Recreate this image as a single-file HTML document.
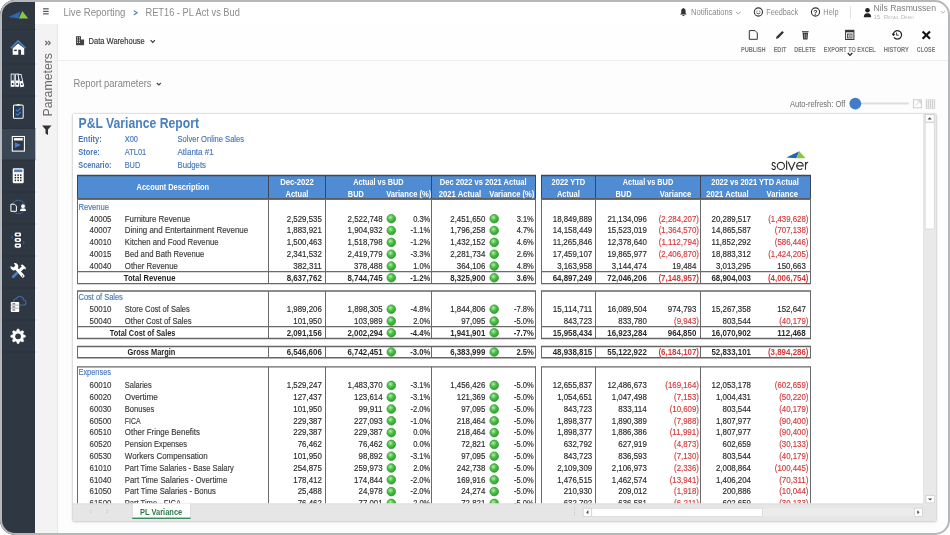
<!DOCTYPE html>
<html><head><meta charset="utf-8">
<style>
*{margin:0;padding:0;box-sizing:border-box}
html,body{width:950px;height:535px;overflow:hidden;background:#fff;font-family:"Liberation Sans",sans-serif}
#clip{position:absolute;left:0;top:0;width:950px;height:535px;border-radius:15px;overflow:hidden;background:#fdfdfd}
#frame{position:absolute;left:0;top:0;width:950px;height:535px;border-radius:15px;border:2.5px solid #b6b7ba;pointer-events:none}
#side{position:absolute;left:0;top:0;width:35.7px;height:535px;background:#2f3742}
#hdr{position:absolute;left:35.3px;top:0;width:915px;height:24px;background:#fff;box-shadow:0 1px 2px rgba(0,0,0,0.10)}
#panel{position:absolute;left:35.3px;top:24px;width:23px;height:511px;background:#f3f3f3;border-right:1px solid #e6e6e6}
#tb{position:absolute;left:58.2px;top:24px;width:892px;height:36.5px;border-bottom:1px solid #ededed;background:#fefefe}
#sheet{position:absolute;left:73px;top:113.8px;width:863px;height:407.6px;background:#fff;box-shadow:0 0 2px rgba(0,0,0,0.28), 0 1px 3px rgba(0,0,0,0.12)}
svg{position:absolute;left:0;top:0;will-change:transform}
text{font-family:"Liberation Sans",sans-serif}
</style></head><body>
<div id="clip">
  <div id="side"></div>
  <div id="hdr"></div>
  <div id="panel"></div>
  <div id="tb"></div>
  <div id="sheet"></div>
  <svg width="950" height="535" viewBox="0 0 950 535">
    <defs>
      <radialGradient id="gdot" cx="0.4" cy="0.35" r="0.7">
        <stop offset="0" stop-color="#b6f0a0"/>
        <stop offset="0.45" stop-color="#4cc24a"/>
        <stop offset="1" stop-color="#2a9a2a"/>
      </radialGradient>
      <clipPath id="shclip"><rect x="73" y="113.4" width="850.6" height="390.2"/></clipPath>
    </defs>
    <g clip-path="url(#shclip)">
<text x="78.5" y="127.6" font-size="13.8" font-weight="700" fill="#4a7fbf" textLength="120.5" lengthAdjust="spacingAndGlyphs">P&amp;L Variance Report</text>
<text x="78.3" y="142.2" font-size="8.7" font-weight="700" fill="#4678bd" textLength="23.48" lengthAdjust="spacingAndGlyphs">Entity:</text>
<text x="124.7" y="142.2" font-size="8.7" fill="#4678bd" stroke="#4678bd" stroke-width="0.16" textLength="13.26" lengthAdjust="spacingAndGlyphs">X00</text>
<text x="177.5" y="142.2" font-size="8.7" fill="#4678bd" stroke="#4678bd" stroke-width="0.16" textLength="66.55" lengthAdjust="spacingAndGlyphs">Solver Online Sales</text>
<text x="78.3" y="155.3" font-size="8.7" font-weight="700" fill="#4678bd" textLength="21.56" lengthAdjust="spacingAndGlyphs">Store:</text>
<text x="124.7" y="155.3" font-size="8.7" fill="#4678bd" stroke="#4678bd" stroke-width="0.16" textLength="21.62" lengthAdjust="spacingAndGlyphs">ATL01</text>
<text x="177.5" y="155.3" font-size="8.7" fill="#4678bd" stroke="#4678bd" stroke-width="0.16" textLength="36.27" lengthAdjust="spacingAndGlyphs">Atlanta #1</text>
<text x="78.3" y="168.2" font-size="8.7" font-weight="700" fill="#4678bd" textLength="33.22" lengthAdjust="spacingAndGlyphs">Scenario:</text>
<text x="124.7" y="168.2" font-size="8.7" fill="#4678bd" stroke="#4678bd" stroke-width="0.16" textLength="15.58" lengthAdjust="spacingAndGlyphs">BUD</text>
<text x="177.5" y="168.2" font-size="8.7" fill="#4678bd" stroke="#4678bd" stroke-width="0.16" textLength="28.45" lengthAdjust="spacingAndGlyphs">Budgets</text>
<text x="771.3" y="169.8" font-size="15" textLength="4.8" lengthAdjust="spacingAndGlyphs">s</text>
<circle cx="780.85" cy="165.9" r="3.6" fill="none" stroke="#333" stroke-width="1.2"/>
<rect x="786" y="160.6" width="1.2" height="9.2" fill="#333"/>
<path d="M788.3 162 L791.6 169.8 L794.9 162" fill="none" stroke="#333" stroke-width="1.2"/>
<path d="M796.8 165.9 L803.2 165.9 A3.3 3.6 0 1 0 802.3 168.4" fill="none" stroke="#333" stroke-width="1.15"/>
<path d="M805.5 162 L805.5 169.8 M805.5 165.3 Q806 162.2 808.2 162.2" fill="none" stroke="#333" stroke-width="1.15"/>
<path d="M786.2 157.4 L799.3 151.2 L796.3 158.3 Z" fill="#2266b0" />
<path d="M796.6 158.3 L799.3 151.2 L805.6 158.3 Z" fill="#8cc63f" />
<rect x="77.5" y="175.5" width="458.0" height="23.400000000000006" fill="#508cd3" />
<rect x="541.5" y="175.5" width="269.0" height="23.400000000000006" fill="#508cd3" />
<line x1="77.5" y1="175.5" x2="77.5" y2="198.9" stroke="#3a475a" stroke-width="1" />
<line x1="268.5" y1="175.5" x2="268.5" y2="198.9" stroke="#3a475a" stroke-width="1" />
<line x1="325.5" y1="175.5" x2="325.5" y2="198.9" stroke="#3a475a" stroke-width="1" />
<line x1="431.5" y1="175.5" x2="431.5" y2="198.9" stroke="#3a475a" stroke-width="1" />
<line x1="535.5" y1="175.5" x2="535.5" y2="198.9" stroke="#3a475a" stroke-width="1" />
<line x1="77.0" y1="175.5" x2="536.0" y2="175.5" stroke="#3a475a" stroke-width="1.3" />
<line x1="77.0" y1="198.9" x2="536.0" y2="198.9" stroke="#3a475a" stroke-width="1.6" />
<line x1="541.5" y1="175.5" x2="541.5" y2="198.9" stroke="#3a475a" stroke-width="1" />
<line x1="595.5" y1="175.5" x2="595.5" y2="198.9" stroke="#3a475a" stroke-width="1" />
<line x1="700.5" y1="175.5" x2="700.5" y2="198.9" stroke="#3a475a" stroke-width="1" />
<line x1="810.5" y1="175.5" x2="810.5" y2="198.9" stroke="#3a475a" stroke-width="1" />
<line x1="541.0" y1="175.5" x2="811.0" y2="175.5" stroke="#3a475a" stroke-width="1.3" />
<line x1="541.0" y1="198.9" x2="811.0" y2="198.9" stroke="#3a475a" stroke-width="1.6" />
<text x="172.8" y="190.1" font-size="8.6" font-weight="700" fill="#ffffff" text-anchor="middle" textLength="72.51" lengthAdjust="spacingAndGlyphs">Account Description</text>
<text x="297" y="184.6" font-size="8.6" font-weight="700" fill="#ffffff" text-anchor="middle" textLength="33.61" lengthAdjust="spacingAndGlyphs">Dec-2022</text>
<text x="297" y="196.5" font-size="8.6" font-weight="700" fill="#ffffff" text-anchor="middle" textLength="22.91" lengthAdjust="spacingAndGlyphs">Actual</text>
<text x="378.4" y="184.6" font-size="8.6" font-weight="700" fill="#ffffff" text-anchor="middle" textLength="50.31" lengthAdjust="spacingAndGlyphs">Actual vs BUD</text>
<text x="355.8" y="196.5" font-size="8.6" font-weight="700" fill="#ffffff" text-anchor="middle" textLength="15.95" lengthAdjust="spacingAndGlyphs">BUD</text>
<text x="408.7" y="196.5" font-size="8.6" font-weight="700" fill="#ffffff" text-anchor="middle" textLength="45.11" lengthAdjust="spacingAndGlyphs">Variance (%)</text>
<text x="483.2" y="184.6" font-size="8.6" font-weight="700" fill="#ffffff" text-anchor="middle" textLength="86.77" lengthAdjust="spacingAndGlyphs">Dec 2022 vs 2021 Actual</text>
<text x="460" y="196.5" font-size="8.6" font-weight="700" fill="#ffffff" text-anchor="middle" textLength="42.4" lengthAdjust="spacingAndGlyphs">2021 Actual</text>
<text x="511.8" y="196.5" font-size="8.6" font-weight="700" fill="#ffffff" text-anchor="middle" textLength="45.11" lengthAdjust="spacingAndGlyphs">Variance (%)</text>
<text x="568.4" y="184.6" font-size="8.6" font-weight="700" fill="#ffffff" text-anchor="middle" textLength="33.73" lengthAdjust="spacingAndGlyphs">2022 YTD</text>
<text x="568.4" y="196.5" font-size="8.6" font-weight="700" fill="#ffffff" text-anchor="middle" textLength="22.91" lengthAdjust="spacingAndGlyphs">Actual</text>
<text x="648" y="184.6" font-size="8.6" font-weight="700" fill="#ffffff" text-anchor="middle" textLength="50.31" lengthAdjust="spacingAndGlyphs">Actual vs BUD</text>
<text x="623.5" y="196.5" font-size="8.6" font-weight="700" fill="#ffffff" text-anchor="middle" textLength="15.95" lengthAdjust="spacingAndGlyphs">BUD</text>
<text x="675.6" y="196.5" font-size="8.6" font-weight="700" fill="#ffffff" text-anchor="middle" textLength="31.47" lengthAdjust="spacingAndGlyphs">Variance</text>
<text x="755" y="184.6" font-size="8.6" font-weight="700" fill="#ffffff" text-anchor="middle" textLength="87.58" lengthAdjust="spacingAndGlyphs">2022 vs 2021 YTD Actual</text>
<text x="727.5" y="196.5" font-size="8.6" font-weight="700" fill="#ffffff" text-anchor="middle" textLength="42.4" lengthAdjust="spacingAndGlyphs">2021 Actual</text>
<text x="782.3" y="196.5" font-size="8.6" font-weight="700" fill="#ffffff" text-anchor="middle" textLength="31.47" lengthAdjust="spacingAndGlyphs">Variance</text>
<line x1="77.5" y1="198.9" x2="77.5" y2="283.6" stroke="#6a6a6a" stroke-width="1" />
<line x1="268.5" y1="198.9" x2="268.5" y2="283.6" stroke="#6a6a6a" stroke-width="1" />
<line x1="325.5" y1="198.9" x2="325.5" y2="283.6" stroke="#6a6a6a" stroke-width="1" />
<line x1="431.5" y1="198.9" x2="431.5" y2="283.6" stroke="#6a6a6a" stroke-width="1" />
<line x1="535.5" y1="198.9" x2="535.5" y2="283.6" stroke="#6a6a6a" stroke-width="1" />
<line x1="77.0" y1="198.9" x2="536.0" y2="198.9" stroke="#666" stroke-width="1.4" />
<line x1="77.0" y1="283.6" x2="536.0" y2="283.6" stroke="#666" stroke-width="1.4" />
<line x1="77.0" y1="271.6" x2="536.0" y2="271.6" stroke="#6a6a6a" stroke-width="1.3" />
<line x1="541.5" y1="198.9" x2="541.5" y2="283.6" stroke="#6a6a6a" stroke-width="1" />
<line x1="595.5" y1="198.9" x2="595.5" y2="283.6" stroke="#6a6a6a" stroke-width="1" />
<line x1="700.5" y1="198.9" x2="700.5" y2="283.6" stroke="#6a6a6a" stroke-width="1" />
<line x1="810.5" y1="198.9" x2="810.5" y2="283.6" stroke="#6a6a6a" stroke-width="1" />
<line x1="541.0" y1="198.9" x2="811.0" y2="198.9" stroke="#666" stroke-width="1.4" />
<line x1="541.0" y1="283.6" x2="811.0" y2="283.6" stroke="#666" stroke-width="1.4" />
<line x1="541.0" y1="271.6" x2="811.0" y2="271.6" stroke="#6a6a6a" stroke-width="1.3" />
<text x="78.5" y="209.6" font-size="8.7" fill="#4678bd" stroke="#4678bd" stroke-width="0.16" textLength="30.61" lengthAdjust="spacingAndGlyphs">Revenue</text>
<text x="89.5" y="221.5" font-size="8.7" fill="#3b3b3b" stroke="#3b3b3b" stroke-width="0.16" textLength="21.93" lengthAdjust="spacingAndGlyphs">40005</text>
<text x="124.8" y="221.5" font-size="8.7" fill="#3b3b3b" stroke="#3b3b3b" stroke-width="0.16" textLength="65.39" lengthAdjust="spacingAndGlyphs">Furniture Revenue</text>
<text x="321.8" y="221.5" font-size="8.7" fill="#2b2b2b" stroke="#2b2b2b" stroke-width="0.16" text-anchor="end" textLength="35.02" lengthAdjust="spacingAndGlyphs">2,529,535</text>
<text x="382.6" y="221.5" font-size="8.7" fill="#2b2b2b" stroke="#2b2b2b" stroke-width="0.16" text-anchor="end" textLength="35.02" lengthAdjust="spacingAndGlyphs">2,522,748</text>
<circle cx="391.3" cy="218.7" r="4.3" fill="url(#gdot)" stroke="#3c9a3c" stroke-width="0.8"/>
<text x="430.3" y="221.5" font-size="8.7" fill="#2b2b2b" stroke="#2b2b2b" stroke-width="0.16" text-anchor="end" textLength="17.14" lengthAdjust="spacingAndGlyphs">0.3%</text>
<text x="485.3" y="221.5" font-size="8.7" fill="#2b2b2b" stroke="#2b2b2b" stroke-width="0.16" text-anchor="end" textLength="35.02" lengthAdjust="spacingAndGlyphs">2,451,650</text>
<circle cx="494.2" cy="218.7" r="4.3" fill="url(#gdot)" stroke="#3c9a3c" stroke-width="0.8"/>
<text x="533.8" y="221.5" font-size="8.7" fill="#2b2b2b" stroke="#2b2b2b" stroke-width="0.16" text-anchor="end" textLength="17.14" lengthAdjust="spacingAndGlyphs">3.1%</text>
<text x="592.2" y="221.5" font-size="8.7" fill="#2b2b2b" stroke="#2b2b2b" stroke-width="0.16" text-anchor="end" textLength="39.41" lengthAdjust="spacingAndGlyphs">18,849,889</text>
<text x="646.8" y="221.5" font-size="8.7" fill="#2b2b2b" stroke="#2b2b2b" stroke-width="0.16" text-anchor="end" textLength="39.41" lengthAdjust="spacingAndGlyphs">21,134,096</text>
<text x="699.0" y="221.5" font-size="8.7" fill="#d23b3b" stroke="#d23b3b" stroke-width="0.16" text-anchor="end" textLength="40.27" lengthAdjust="spacingAndGlyphs">(2,284,207)</text>
<text x="808.5" y="221.5" font-size="8.7" fill="#d23b3b" stroke="#d23b3b" stroke-width="0.16" text-anchor="end" textLength="40.27" lengthAdjust="spacingAndGlyphs">(1,439,628)</text>
<text x="751.0" y="221.5" font-size="8.7" fill="#2b2b2b" stroke="#2b2b2b" stroke-width="0.16" text-anchor="end" textLength="39.41" lengthAdjust="spacingAndGlyphs">20,289,517</text>
<text x="89.5" y="233.35" font-size="8.7" fill="#3b3b3b" stroke="#3b3b3b" stroke-width="0.16" textLength="21.93" lengthAdjust="spacingAndGlyphs">40007</text>
<text x="124.8" y="233.35" font-size="8.7" fill="#3b3b3b" stroke="#3b3b3b" stroke-width="0.16" textLength="123.37" lengthAdjust="spacingAndGlyphs">Dining and Entertainment Revenue</text>
<text x="321.8" y="233.35" font-size="8.7" fill="#2b2b2b" stroke="#2b2b2b" stroke-width="0.16" text-anchor="end" textLength="35.02" lengthAdjust="spacingAndGlyphs">1,883,921</text>
<text x="382.6" y="233.35" font-size="8.7" fill="#2b2b2b" stroke="#2b2b2b" stroke-width="0.16" text-anchor="end" textLength="35.02" lengthAdjust="spacingAndGlyphs">1,904,932</text>
<circle cx="391.3" cy="230.54999999999998" r="4.3" fill="url(#gdot)" stroke="#3c9a3c" stroke-width="0.8"/>
<text x="430.3" y="233.35" font-size="8.7" fill="#2b2b2b" stroke="#2b2b2b" stroke-width="0.16" text-anchor="end" textLength="19.78" lengthAdjust="spacingAndGlyphs">-1.1%</text>
<text x="485.3" y="233.35" font-size="8.7" fill="#2b2b2b" stroke="#2b2b2b" stroke-width="0.16" text-anchor="end" textLength="35.02" lengthAdjust="spacingAndGlyphs">1,796,258</text>
<circle cx="494.2" cy="230.54999999999998" r="4.3" fill="url(#gdot)" stroke="#3c9a3c" stroke-width="0.8"/>
<text x="533.8" y="233.35" font-size="8.7" fill="#2b2b2b" stroke="#2b2b2b" stroke-width="0.16" text-anchor="end" textLength="17.14" lengthAdjust="spacingAndGlyphs">4.7%</text>
<text x="592.2" y="233.35" font-size="8.7" fill="#2b2b2b" stroke="#2b2b2b" stroke-width="0.16" text-anchor="end" textLength="39.41" lengthAdjust="spacingAndGlyphs">14,158,449</text>
<text x="646.8" y="233.35" font-size="8.7" fill="#2b2b2b" stroke="#2b2b2b" stroke-width="0.16" text-anchor="end" textLength="39.41" lengthAdjust="spacingAndGlyphs">15,523,019</text>
<text x="699.0" y="233.35" font-size="8.7" fill="#d23b3b" stroke="#d23b3b" stroke-width="0.16" text-anchor="end" textLength="40.27" lengthAdjust="spacingAndGlyphs">(1,364,570)</text>
<text x="808.5" y="233.35" font-size="8.7" fill="#d23b3b" stroke="#d23b3b" stroke-width="0.16" text-anchor="end" textLength="33.72" lengthAdjust="spacingAndGlyphs">(707,138)</text>
<text x="751.0" y="233.35" font-size="8.7" fill="#2b2b2b" stroke="#2b2b2b" stroke-width="0.16" text-anchor="end" textLength="39.41" lengthAdjust="spacingAndGlyphs">14,865,587</text>
<text x="89.5" y="245.2" font-size="8.7" fill="#3b3b3b" stroke="#3b3b3b" stroke-width="0.16" textLength="21.93" lengthAdjust="spacingAndGlyphs">40010</text>
<text x="124.8" y="245.2" font-size="8.7" fill="#3b3b3b" stroke="#3b3b3b" stroke-width="0.16" textLength="93.77" lengthAdjust="spacingAndGlyphs">Kitchen and Food Revenue</text>
<text x="321.8" y="245.2" font-size="8.7" fill="#2b2b2b" stroke="#2b2b2b" stroke-width="0.16" text-anchor="end" textLength="35.02" lengthAdjust="spacingAndGlyphs">1,500,463</text>
<text x="382.6" y="245.2" font-size="8.7" fill="#2b2b2b" stroke="#2b2b2b" stroke-width="0.16" text-anchor="end" textLength="35.02" lengthAdjust="spacingAndGlyphs">1,518,798</text>
<circle cx="391.3" cy="242.39999999999998" r="4.3" fill="url(#gdot)" stroke="#3c9a3c" stroke-width="0.8"/>
<text x="430.3" y="245.2" font-size="8.7" fill="#2b2b2b" stroke="#2b2b2b" stroke-width="0.16" text-anchor="end" textLength="19.78" lengthAdjust="spacingAndGlyphs">-1.2%</text>
<text x="485.3" y="245.2" font-size="8.7" fill="#2b2b2b" stroke="#2b2b2b" stroke-width="0.16" text-anchor="end" textLength="35.02" lengthAdjust="spacingAndGlyphs">1,432,152</text>
<circle cx="494.2" cy="242.39999999999998" r="4.3" fill="url(#gdot)" stroke="#3c9a3c" stroke-width="0.8"/>
<text x="533.8" y="245.2" font-size="8.7" fill="#2b2b2b" stroke="#2b2b2b" stroke-width="0.16" text-anchor="end" textLength="17.14" lengthAdjust="spacingAndGlyphs">4.6%</text>
<text x="592.2" y="245.2" font-size="8.7" fill="#2b2b2b" stroke="#2b2b2b" stroke-width="0.16" text-anchor="end" textLength="39.41" lengthAdjust="spacingAndGlyphs">11,265,846</text>
<text x="646.8" y="245.2" font-size="8.7" fill="#2b2b2b" stroke="#2b2b2b" stroke-width="0.16" text-anchor="end" textLength="39.41" lengthAdjust="spacingAndGlyphs">12,378,640</text>
<text x="699.0" y="245.2" font-size="8.7" fill="#d23b3b" stroke="#d23b3b" stroke-width="0.16" text-anchor="end" textLength="40.27" lengthAdjust="spacingAndGlyphs">(1,112,794)</text>
<text x="808.5" y="245.2" font-size="8.7" fill="#d23b3b" stroke="#d23b3b" stroke-width="0.16" text-anchor="end" textLength="33.72" lengthAdjust="spacingAndGlyphs">(586,446)</text>
<text x="751.0" y="245.2" font-size="8.7" fill="#2b2b2b" stroke="#2b2b2b" stroke-width="0.16" text-anchor="end" textLength="39.41" lengthAdjust="spacingAndGlyphs">11,852,292</text>
<text x="89.5" y="257.05" font-size="8.7" fill="#3b3b3b" stroke="#3b3b3b" stroke-width="0.16" textLength="21.93" lengthAdjust="spacingAndGlyphs">40015</text>
<text x="124.8" y="257.05" font-size="8.7" fill="#3b3b3b" stroke="#3b3b3b" stroke-width="0.16" textLength="79.55" lengthAdjust="spacingAndGlyphs">Bed and Bath Revenue</text>
<text x="321.8" y="257.05" font-size="8.7" fill="#2b2b2b" stroke="#2b2b2b" stroke-width="0.16" text-anchor="end" textLength="35.02" lengthAdjust="spacingAndGlyphs">2,341,532</text>
<text x="382.6" y="257.05" font-size="8.7" fill="#2b2b2b" stroke="#2b2b2b" stroke-width="0.16" text-anchor="end" textLength="35.02" lengthAdjust="spacingAndGlyphs">2,419,779</text>
<circle cx="391.3" cy="254.25" r="4.3" fill="url(#gdot)" stroke="#3c9a3c" stroke-width="0.8"/>
<text x="430.3" y="257.05" font-size="8.7" fill="#2b2b2b" stroke="#2b2b2b" stroke-width="0.16" text-anchor="end" textLength="19.78" lengthAdjust="spacingAndGlyphs">-3.3%</text>
<text x="485.3" y="257.05" font-size="8.7" fill="#2b2b2b" stroke="#2b2b2b" stroke-width="0.16" text-anchor="end" textLength="35.02" lengthAdjust="spacingAndGlyphs">2,281,734</text>
<circle cx="494.2" cy="254.25" r="4.3" fill="url(#gdot)" stroke="#3c9a3c" stroke-width="0.8"/>
<text x="533.8" y="257.05" font-size="8.7" fill="#2b2b2b" stroke="#2b2b2b" stroke-width="0.16" text-anchor="end" textLength="17.14" lengthAdjust="spacingAndGlyphs">2.6%</text>
<text x="592.2" y="257.05" font-size="8.7" fill="#2b2b2b" stroke="#2b2b2b" stroke-width="0.16" text-anchor="end" textLength="39.41" lengthAdjust="spacingAndGlyphs">17,459,107</text>
<text x="646.8" y="257.05" font-size="8.7" fill="#2b2b2b" stroke="#2b2b2b" stroke-width="0.16" text-anchor="end" textLength="39.41" lengthAdjust="spacingAndGlyphs">19,865,977</text>
<text x="699.0" y="257.05" font-size="8.7" fill="#d23b3b" stroke="#d23b3b" stroke-width="0.16" text-anchor="end" textLength="40.27" lengthAdjust="spacingAndGlyphs">(2,406,870)</text>
<text x="808.5" y="257.05" font-size="8.7" fill="#d23b3b" stroke="#d23b3b" stroke-width="0.16" text-anchor="end" textLength="40.27" lengthAdjust="spacingAndGlyphs">(1,424,205)</text>
<text x="751.0" y="257.05" font-size="8.7" fill="#2b2b2b" stroke="#2b2b2b" stroke-width="0.16" text-anchor="end" textLength="39.41" lengthAdjust="spacingAndGlyphs">18,883,312</text>
<text x="89.5" y="268.9" font-size="8.7" fill="#3b3b3b" stroke="#3b3b3b" stroke-width="0.16" textLength="21.93" lengthAdjust="spacingAndGlyphs">40040</text>
<text x="124.8" y="268.9" font-size="8.7" fill="#3b3b3b" stroke="#3b3b3b" stroke-width="0.16" textLength="53.06" lengthAdjust="spacingAndGlyphs">Other Revenue</text>
<text x="321.8" y="268.9" font-size="8.7" fill="#2b2b2b" stroke="#2b2b2b" stroke-width="0.16" text-anchor="end" textLength="28.48" lengthAdjust="spacingAndGlyphs">382,311</text>
<text x="382.6" y="268.9" font-size="8.7" fill="#2b2b2b" stroke="#2b2b2b" stroke-width="0.16" text-anchor="end" textLength="28.48" lengthAdjust="spacingAndGlyphs">378,488</text>
<circle cx="391.3" cy="266.09999999999997" r="4.3" fill="url(#gdot)" stroke="#3c9a3c" stroke-width="0.8"/>
<text x="430.3" y="268.9" font-size="8.7" fill="#2b2b2b" stroke="#2b2b2b" stroke-width="0.16" text-anchor="end" textLength="17.14" lengthAdjust="spacingAndGlyphs">1.0%</text>
<text x="485.3" y="268.9" font-size="8.7" fill="#2b2b2b" stroke="#2b2b2b" stroke-width="0.16" text-anchor="end" textLength="28.48" lengthAdjust="spacingAndGlyphs">364,106</text>
<circle cx="494.2" cy="266.09999999999997" r="4.3" fill="url(#gdot)" stroke="#3c9a3c" stroke-width="0.8"/>
<text x="533.8" y="268.9" font-size="8.7" fill="#2b2b2b" stroke="#2b2b2b" stroke-width="0.16" text-anchor="end" textLength="17.14" lengthAdjust="spacingAndGlyphs">4.8%</text>
<text x="592.2" y="268.9" font-size="8.7" fill="#2b2b2b" stroke="#2b2b2b" stroke-width="0.16" text-anchor="end" textLength="35.02" lengthAdjust="spacingAndGlyphs">3,163,958</text>
<text x="646.8" y="268.9" font-size="8.7" fill="#2b2b2b" stroke="#2b2b2b" stroke-width="0.16" text-anchor="end" textLength="35.02" lengthAdjust="spacingAndGlyphs">3,144,474</text>
<text x="696.3" y="268.9" font-size="8.7" fill="#2b2b2b" stroke="#2b2b2b" stroke-width="0.16" text-anchor="end" textLength="24.09" lengthAdjust="spacingAndGlyphs">19,484</text>
<text x="805.8" y="268.9" font-size="8.7" fill="#2b2b2b" stroke="#2b2b2b" stroke-width="0.16" text-anchor="end" textLength="28.48" lengthAdjust="spacingAndGlyphs">150,663</text>
<text x="751.0" y="268.9" font-size="8.7" fill="#2b2b2b" stroke="#2b2b2b" stroke-width="0.16" text-anchor="end" textLength="35.02" lengthAdjust="spacingAndGlyphs">3,013,295</text>
<text x="175.4" y="280.6" font-size="8.7" font-weight="700" fill="#1e1e1e" text-anchor="end" textLength="51.6" lengthAdjust="spacingAndGlyphs">Total Revenue</text>
<text x="321.8" y="280.6" font-size="8.7" font-weight="700" fill="#2b2b2b" text-anchor="end" textLength="35.16" lengthAdjust="spacingAndGlyphs">8,637,762</text>
<text x="382.6" y="280.6" font-size="8.7" font-weight="700" fill="#2b2b2b" text-anchor="end" textLength="35.16" lengthAdjust="spacingAndGlyphs">8,744,745</text>
<circle cx="391.3" cy="277.8" r="4.3" fill="url(#gdot)" stroke="#3c9a3c" stroke-width="0.8"/>
<text x="430.3" y="280.6" font-size="8.7" font-weight="700" fill="#2b2b2b" text-anchor="end" textLength="20.03" lengthAdjust="spacingAndGlyphs">-1.2%</text>
<text x="485.3" y="280.6" font-size="8.7" font-weight="700" fill="#2b2b2b" text-anchor="end" textLength="35.16" lengthAdjust="spacingAndGlyphs">8,325,900</text>
<circle cx="494.2" cy="277.8" r="4.3" fill="url(#gdot)" stroke="#3c9a3c" stroke-width="0.8"/>
<text x="533.8" y="280.6" font-size="8.7" font-weight="700" fill="#2b2b2b" text-anchor="end" textLength="17.39" lengthAdjust="spacingAndGlyphs">3.6%</text>
<text x="592.2" y="280.6" font-size="8.7" font-weight="700" fill="#2b2b2b" text-anchor="end" textLength="39.55" lengthAdjust="spacingAndGlyphs">64,897,249</text>
<text x="646.8" y="280.6" font-size="8.7" font-weight="700" fill="#2b2b2b" text-anchor="end" textLength="39.55" lengthAdjust="spacingAndGlyphs">72,046,206</text>
<text x="699.0" y="280.6" font-size="8.7" font-weight="700" fill="#d23b3b" text-anchor="end" textLength="40.54" lengthAdjust="spacingAndGlyphs">(7,148,957)</text>
<text x="808.5" y="280.6" font-size="8.7" font-weight="700" fill="#d23b3b" text-anchor="end" textLength="40.54" lengthAdjust="spacingAndGlyphs">(4,006,754)</text>
<text x="751.0" y="280.6" font-size="8.7" font-weight="700" fill="#2b2b2b" text-anchor="end" textLength="39.55" lengthAdjust="spacingAndGlyphs">68,904,003</text>
<line x1="77.5" y1="291.0" x2="77.5" y2="338.5" stroke="#6a6a6a" stroke-width="1" />
<line x1="268.5" y1="291.0" x2="268.5" y2="338.5" stroke="#6a6a6a" stroke-width="1" />
<line x1="325.5" y1="291.0" x2="325.5" y2="338.5" stroke="#6a6a6a" stroke-width="1" />
<line x1="431.5" y1="291.0" x2="431.5" y2="338.5" stroke="#6a6a6a" stroke-width="1" />
<line x1="535.5" y1="291.0" x2="535.5" y2="338.5" stroke="#6a6a6a" stroke-width="1" />
<line x1="77.0" y1="291.0" x2="536.0" y2="291.0" stroke="#666" stroke-width="1.4" />
<line x1="77.0" y1="338.5" x2="536.0" y2="338.5" stroke="#666" stroke-width="1.4" />
<line x1="77.0" y1="326.6" x2="536.0" y2="326.6" stroke="#6a6a6a" stroke-width="1.3" />
<line x1="541.5" y1="291.0" x2="541.5" y2="338.5" stroke="#6a6a6a" stroke-width="1" />
<line x1="595.5" y1="291.0" x2="595.5" y2="338.5" stroke="#6a6a6a" stroke-width="1" />
<line x1="700.5" y1="291.0" x2="700.5" y2="338.5" stroke="#6a6a6a" stroke-width="1" />
<line x1="810.5" y1="291.0" x2="810.5" y2="338.5" stroke="#6a6a6a" stroke-width="1" />
<line x1="541.0" y1="291.0" x2="811.0" y2="291.0" stroke="#666" stroke-width="1.4" />
<line x1="541.0" y1="338.5" x2="811.0" y2="338.5" stroke="#666" stroke-width="1.4" />
<line x1="541.0" y1="326.6" x2="811.0" y2="326.6" stroke="#6a6a6a" stroke-width="1.3" />
<text x="78.5" y="299.6" font-size="8.7" fill="#4678bd" stroke="#4678bd" stroke-width="0.16" textLength="44.35" lengthAdjust="spacingAndGlyphs">Cost of Sales</text>
<text x="89.5" y="312.0" font-size="8.7" fill="#3b3b3b" stroke="#3b3b3b" stroke-width="0.16" textLength="21.93" lengthAdjust="spacingAndGlyphs">50010</text>
<text x="124.8" y="312.0" font-size="8.7" fill="#3b3b3b" stroke="#3b3b3b" stroke-width="0.16" textLength="65.06" lengthAdjust="spacingAndGlyphs">Store Cost of Sales</text>
<text x="321.8" y="312.0" font-size="8.7" fill="#2b2b2b" stroke="#2b2b2b" stroke-width="0.16" text-anchor="end" textLength="35.02" lengthAdjust="spacingAndGlyphs">1,989,206</text>
<text x="382.6" y="312.0" font-size="8.7" fill="#2b2b2b" stroke="#2b2b2b" stroke-width="0.16" text-anchor="end" textLength="35.02" lengthAdjust="spacingAndGlyphs">1,898,305</text>
<circle cx="391.3" cy="309.2" r="4.3" fill="url(#gdot)" stroke="#3c9a3c" stroke-width="0.8"/>
<text x="430.3" y="312.0" font-size="8.7" fill="#2b2b2b" stroke="#2b2b2b" stroke-width="0.16" text-anchor="end" textLength="19.78" lengthAdjust="spacingAndGlyphs">-4.8%</text>
<text x="485.3" y="312.0" font-size="8.7" fill="#2b2b2b" stroke="#2b2b2b" stroke-width="0.16" text-anchor="end" textLength="35.02" lengthAdjust="spacingAndGlyphs">1,844,806</text>
<circle cx="494.2" cy="309.2" r="4.3" fill="url(#gdot)" stroke="#3c9a3c" stroke-width="0.8"/>
<text x="533.8" y="312.0" font-size="8.7" fill="#2b2b2b" stroke="#2b2b2b" stroke-width="0.16" text-anchor="end" textLength="19.78" lengthAdjust="spacingAndGlyphs">-7.8%</text>
<text x="592.2" y="312.0" font-size="8.7" fill="#2b2b2b" stroke="#2b2b2b" stroke-width="0.16" text-anchor="end" textLength="39.41" lengthAdjust="spacingAndGlyphs">15,114,711</text>
<text x="646.8" y="312.0" font-size="8.7" fill="#2b2b2b" stroke="#2b2b2b" stroke-width="0.16" text-anchor="end" textLength="39.41" lengthAdjust="spacingAndGlyphs">16,089,504</text>
<text x="696.3" y="312.0" font-size="8.7" fill="#2b2b2b" stroke="#2b2b2b" stroke-width="0.16" text-anchor="end" textLength="28.48" lengthAdjust="spacingAndGlyphs">974,793</text>
<text x="805.8" y="312.0" font-size="8.7" fill="#2b2b2b" stroke="#2b2b2b" stroke-width="0.16" text-anchor="end" textLength="28.48" lengthAdjust="spacingAndGlyphs">152,647</text>
<text x="751.0" y="312.0" font-size="8.7" fill="#2b2b2b" stroke="#2b2b2b" stroke-width="0.16" text-anchor="end" textLength="39.41" lengthAdjust="spacingAndGlyphs">15,267,358</text>
<text x="89.5" y="323.9" font-size="8.7" fill="#3b3b3b" stroke="#3b3b3b" stroke-width="0.16" textLength="21.93" lengthAdjust="spacingAndGlyphs">50040</text>
<text x="124.8" y="323.9" font-size="8.7" fill="#3b3b3b" stroke="#3b3b3b" stroke-width="0.16" textLength="66.8" lengthAdjust="spacingAndGlyphs">Other Cost of Sales</text>
<text x="321.8" y="323.9" font-size="8.7" fill="#2b2b2b" stroke="#2b2b2b" stroke-width="0.16" text-anchor="end" textLength="28.48" lengthAdjust="spacingAndGlyphs">101,950</text>
<text x="382.6" y="323.9" font-size="8.7" fill="#2b2b2b" stroke="#2b2b2b" stroke-width="0.16" text-anchor="end" textLength="28.48" lengthAdjust="spacingAndGlyphs">103,989</text>
<circle cx="391.3" cy="321.09999999999997" r="4.3" fill="url(#gdot)" stroke="#3c9a3c" stroke-width="0.8"/>
<text x="430.3" y="323.9" font-size="8.7" fill="#2b2b2b" stroke="#2b2b2b" stroke-width="0.16" text-anchor="end" textLength="17.14" lengthAdjust="spacingAndGlyphs">2.0%</text>
<text x="485.3" y="323.9" font-size="8.7" fill="#2b2b2b" stroke="#2b2b2b" stroke-width="0.16" text-anchor="end" textLength="24.09" lengthAdjust="spacingAndGlyphs">97,095</text>
<circle cx="494.2" cy="321.09999999999997" r="4.3" fill="url(#gdot)" stroke="#3c9a3c" stroke-width="0.8"/>
<text x="533.8" y="323.9" font-size="8.7" fill="#2b2b2b" stroke="#2b2b2b" stroke-width="0.16" text-anchor="end" textLength="19.78" lengthAdjust="spacingAndGlyphs">-5.0%</text>
<text x="592.2" y="323.9" font-size="8.7" fill="#2b2b2b" stroke="#2b2b2b" stroke-width="0.16" text-anchor="end" textLength="28.48" lengthAdjust="spacingAndGlyphs">843,723</text>
<text x="646.8" y="323.9" font-size="8.7" fill="#2b2b2b" stroke="#2b2b2b" stroke-width="0.16" text-anchor="end" textLength="28.48" lengthAdjust="spacingAndGlyphs">833,780</text>
<text x="699.0" y="323.9" font-size="8.7" fill="#d23b3b" stroke="#d23b3b" stroke-width="0.16" text-anchor="end" textLength="24.95" lengthAdjust="spacingAndGlyphs">(9,943)</text>
<text x="808.5" y="323.9" font-size="8.7" fill="#d23b3b" stroke="#d23b3b" stroke-width="0.16" text-anchor="end" textLength="29.33" lengthAdjust="spacingAndGlyphs">(40,179)</text>
<text x="751.0" y="323.9" font-size="8.7" fill="#2b2b2b" stroke="#2b2b2b" stroke-width="0.16" text-anchor="end" textLength="28.48" lengthAdjust="spacingAndGlyphs">803,544</text>
<text x="175.4" y="335.6" font-size="8.7" font-weight="700" fill="#1e1e1e" text-anchor="end" textLength="65.57" lengthAdjust="spacingAndGlyphs">Total Cost of Sales</text>
<text x="321.8" y="335.6" font-size="8.7" font-weight="700" fill="#2b2b2b" text-anchor="end" textLength="35.16" lengthAdjust="spacingAndGlyphs">2,091,156</text>
<text x="382.6" y="335.6" font-size="8.7" font-weight="700" fill="#2b2b2b" text-anchor="end" textLength="35.16" lengthAdjust="spacingAndGlyphs">2,002,294</text>
<circle cx="391.3" cy="332.8" r="4.3" fill="url(#gdot)" stroke="#3c9a3c" stroke-width="0.8"/>
<text x="430.3" y="335.6" font-size="8.7" font-weight="700" fill="#2b2b2b" text-anchor="end" textLength="20.03" lengthAdjust="spacingAndGlyphs">-4.4%</text>
<text x="485.3" y="335.6" font-size="8.7" font-weight="700" fill="#2b2b2b" text-anchor="end" textLength="35.16" lengthAdjust="spacingAndGlyphs">1,941,901</text>
<circle cx="494.2" cy="332.8" r="4.3" fill="url(#gdot)" stroke="#3c9a3c" stroke-width="0.8"/>
<text x="533.8" y="335.6" font-size="8.7" font-weight="700" fill="#2b2b2b" text-anchor="end" textLength="20.03" lengthAdjust="spacingAndGlyphs">-7.7%</text>
<text x="592.2" y="335.6" font-size="8.7" font-weight="700" fill="#2b2b2b" text-anchor="end" textLength="39.55" lengthAdjust="spacingAndGlyphs">15,958,434</text>
<text x="646.8" y="335.6" font-size="8.7" font-weight="700" fill="#2b2b2b" text-anchor="end" textLength="39.55" lengthAdjust="spacingAndGlyphs">16,923,284</text>
<text x="696.3" y="335.6" font-size="8.7" font-weight="700" fill="#2b2b2b" text-anchor="end" textLength="28.54" lengthAdjust="spacingAndGlyphs">964,850</text>
<text x="805.8" y="335.6" font-size="8.7" font-weight="700" fill="#2b2b2b" text-anchor="end" textLength="28.54" lengthAdjust="spacingAndGlyphs">112,468</text>
<text x="751.0" y="335.6" font-size="8.7" font-weight="700" fill="#2b2b2b" text-anchor="end" textLength="39.55" lengthAdjust="spacingAndGlyphs">16,070,902</text>
<line x1="77.5" y1="346.5" x2="77.5" y2="357.8" stroke="#6a6a6a" stroke-width="1" />
<line x1="268.5" y1="346.5" x2="268.5" y2="357.8" stroke="#6a6a6a" stroke-width="1" />
<line x1="325.5" y1="346.5" x2="325.5" y2="357.8" stroke="#6a6a6a" stroke-width="1" />
<line x1="431.5" y1="346.5" x2="431.5" y2="357.8" stroke="#6a6a6a" stroke-width="1" />
<line x1="535.5" y1="346.5" x2="535.5" y2="357.8" stroke="#6a6a6a" stroke-width="1" />
<line x1="77.0" y1="346.5" x2="536.0" y2="346.5" stroke="#666" stroke-width="1.4" />
<line x1="77.0" y1="357.8" x2="536.0" y2="357.8" stroke="#666" stroke-width="1.4" />
<line x1="541.5" y1="346.5" x2="541.5" y2="357.8" stroke="#6a6a6a" stroke-width="1" />
<line x1="595.5" y1="346.5" x2="595.5" y2="357.8" stroke="#6a6a6a" stroke-width="1" />
<line x1="700.5" y1="346.5" x2="700.5" y2="357.8" stroke="#6a6a6a" stroke-width="1" />
<line x1="810.5" y1="346.5" x2="810.5" y2="357.8" stroke="#6a6a6a" stroke-width="1" />
<line x1="541.0" y1="346.5" x2="811.0" y2="346.5" stroke="#666" stroke-width="1.4" />
<line x1="541.0" y1="357.8" x2="811.0" y2="357.8" stroke="#666" stroke-width="1.4" />
<text x="175.4" y="354.8" font-size="8.7" font-weight="700" fill="#1e1e1e" text-anchor="end" textLength="47.87" lengthAdjust="spacingAndGlyphs">Gross Margin</text>
<text x="321.8" y="354.8" font-size="8.7" font-weight="700" fill="#2b2b2b" text-anchor="end" textLength="35.16" lengthAdjust="spacingAndGlyphs">6,546,606</text>
<text x="382.6" y="354.8" font-size="8.7" font-weight="700" fill="#2b2b2b" text-anchor="end" textLength="35.16" lengthAdjust="spacingAndGlyphs">6,742,451</text>
<circle cx="391.3" cy="352.0" r="4.3" fill="url(#gdot)" stroke="#3c9a3c" stroke-width="0.8"/>
<text x="430.3" y="354.8" font-size="8.7" font-weight="700" fill="#2b2b2b" text-anchor="end" textLength="20.03" lengthAdjust="spacingAndGlyphs">-3.0%</text>
<text x="485.3" y="354.8" font-size="8.7" font-weight="700" fill="#2b2b2b" text-anchor="end" textLength="35.16" lengthAdjust="spacingAndGlyphs">6,383,999</text>
<circle cx="494.2" cy="352.0" r="4.3" fill="url(#gdot)" stroke="#3c9a3c" stroke-width="0.8"/>
<text x="533.8" y="354.8" font-size="8.7" font-weight="700" fill="#2b2b2b" text-anchor="end" textLength="17.39" lengthAdjust="spacingAndGlyphs">2.5%</text>
<text x="592.2" y="354.8" font-size="8.7" font-weight="700" fill="#2b2b2b" text-anchor="end" textLength="39.55" lengthAdjust="spacingAndGlyphs">48,938,815</text>
<text x="646.8" y="354.8" font-size="8.7" font-weight="700" fill="#2b2b2b" text-anchor="end" textLength="39.55" lengthAdjust="spacingAndGlyphs">55,122,922</text>
<text x="699.0" y="354.8" font-size="8.7" font-weight="700" fill="#d23b3b" text-anchor="end" textLength="40.54" lengthAdjust="spacingAndGlyphs">(6,184,107)</text>
<text x="808.5" y="354.8" font-size="8.7" font-weight="700" fill="#d23b3b" text-anchor="end" textLength="40.54" lengthAdjust="spacingAndGlyphs">(3,894,286)</text>
<text x="751.0" y="354.8" font-size="8.7" font-weight="700" fill="#2b2b2b" text-anchor="end" textLength="39.55" lengthAdjust="spacingAndGlyphs">52,833,101</text>
<line x1="77.5" y1="366.9" x2="77.5" y2="520" stroke="#6a6a6a" stroke-width="1" />
<line x1="268.5" y1="366.9" x2="268.5" y2="520" stroke="#6a6a6a" stroke-width="1" />
<line x1="325.5" y1="366.9" x2="325.5" y2="520" stroke="#6a6a6a" stroke-width="1" />
<line x1="431.5" y1="366.9" x2="431.5" y2="520" stroke="#6a6a6a" stroke-width="1" />
<line x1="535.5" y1="366.9" x2="535.5" y2="520" stroke="#6a6a6a" stroke-width="1" />
<line x1="77.0" y1="366.9" x2="536.0" y2="366.9" stroke="#666" stroke-width="1.4" />
<line x1="77.0" y1="520" x2="536.0" y2="520" stroke="#666" stroke-width="1.4" />
<line x1="541.5" y1="366.9" x2="541.5" y2="520" stroke="#6a6a6a" stroke-width="1" />
<line x1="595.5" y1="366.9" x2="595.5" y2="520" stroke="#6a6a6a" stroke-width="1" />
<line x1="700.5" y1="366.9" x2="700.5" y2="520" stroke="#6a6a6a" stroke-width="1" />
<line x1="810.5" y1="366.9" x2="810.5" y2="520" stroke="#6a6a6a" stroke-width="1" />
<line x1="541.0" y1="366.9" x2="811.0" y2="366.9" stroke="#666" stroke-width="1.4" />
<line x1="541.0" y1="520" x2="811.0" y2="520" stroke="#666" stroke-width="1.4" />
<text x="78.5" y="375.3" font-size="8.7" fill="#4678bd" stroke="#4678bd" stroke-width="0.16" textLength="32.43" lengthAdjust="spacingAndGlyphs">Expenses</text>
<text x="89.5" y="388.2" font-size="8.7" fill="#3b3b3b" stroke="#3b3b3b" stroke-width="0.16" textLength="21.93" lengthAdjust="spacingAndGlyphs">60010</text>
<text x="124.8" y="388.2" font-size="8.7" fill="#3b3b3b" stroke="#3b3b3b" stroke-width="0.16" textLength="26.94" lengthAdjust="spacingAndGlyphs">Salaries</text>
<text x="321.8" y="388.2" font-size="8.7" fill="#2b2b2b" stroke="#2b2b2b" stroke-width="0.16" text-anchor="end" textLength="35.02" lengthAdjust="spacingAndGlyphs">1,529,247</text>
<text x="382.6" y="388.2" font-size="8.7" fill="#2b2b2b" stroke="#2b2b2b" stroke-width="0.16" text-anchor="end" textLength="35.02" lengthAdjust="spacingAndGlyphs">1,483,370</text>
<circle cx="391.3" cy="385.4" r="4.3" fill="url(#gdot)" stroke="#3c9a3c" stroke-width="0.8"/>
<text x="430.3" y="388.2" font-size="8.7" fill="#2b2b2b" stroke="#2b2b2b" stroke-width="0.16" text-anchor="end" textLength="19.78" lengthAdjust="spacingAndGlyphs">-3.1%</text>
<text x="485.3" y="388.2" font-size="8.7" fill="#2b2b2b" stroke="#2b2b2b" stroke-width="0.16" text-anchor="end" textLength="35.02" lengthAdjust="spacingAndGlyphs">1,456,426</text>
<circle cx="494.2" cy="385.4" r="4.3" fill="url(#gdot)" stroke="#3c9a3c" stroke-width="0.8"/>
<text x="533.8" y="388.2" font-size="8.7" fill="#2b2b2b" stroke="#2b2b2b" stroke-width="0.16" text-anchor="end" textLength="19.78" lengthAdjust="spacingAndGlyphs">-5.0%</text>
<text x="592.2" y="388.2" font-size="8.7" fill="#2b2b2b" stroke="#2b2b2b" stroke-width="0.16" text-anchor="end" textLength="39.41" lengthAdjust="spacingAndGlyphs">12,655,837</text>
<text x="646.8" y="388.2" font-size="8.7" fill="#2b2b2b" stroke="#2b2b2b" stroke-width="0.16" text-anchor="end" textLength="39.41" lengthAdjust="spacingAndGlyphs">12,486,673</text>
<text x="699.0" y="388.2" font-size="8.7" fill="#d23b3b" stroke="#d23b3b" stroke-width="0.16" text-anchor="end" textLength="33.72" lengthAdjust="spacingAndGlyphs">(169,164)</text>
<text x="808.5" y="388.2" font-size="8.7" fill="#d23b3b" stroke="#d23b3b" stroke-width="0.16" text-anchor="end" textLength="33.72" lengthAdjust="spacingAndGlyphs">(602,659)</text>
<text x="751.0" y="388.2" font-size="8.7" fill="#2b2b2b" stroke="#2b2b2b" stroke-width="0.16" text-anchor="end" textLength="39.41" lengthAdjust="spacingAndGlyphs">12,053,178</text>
<text x="89.5" y="400.0" font-size="8.7" fill="#3b3b3b" stroke="#3b3b3b" stroke-width="0.16" textLength="21.93" lengthAdjust="spacingAndGlyphs">60020</text>
<text x="124.8" y="400.0" font-size="8.7" fill="#3b3b3b" stroke="#3b3b3b" stroke-width="0.16" textLength="33.07" lengthAdjust="spacingAndGlyphs">Overtime</text>
<text x="321.8" y="400.0" font-size="8.7" fill="#2b2b2b" stroke="#2b2b2b" stroke-width="0.16" text-anchor="end" textLength="28.48" lengthAdjust="spacingAndGlyphs">127,437</text>
<text x="382.6" y="400.0" font-size="8.7" fill="#2b2b2b" stroke="#2b2b2b" stroke-width="0.16" text-anchor="end" textLength="28.48" lengthAdjust="spacingAndGlyphs">123,614</text>
<circle cx="391.3" cy="397.2" r="4.3" fill="url(#gdot)" stroke="#3c9a3c" stroke-width="0.8"/>
<text x="430.3" y="400.0" font-size="8.7" fill="#2b2b2b" stroke="#2b2b2b" stroke-width="0.16" text-anchor="end" textLength="19.78" lengthAdjust="spacingAndGlyphs">-3.1%</text>
<text x="485.3" y="400.0" font-size="8.7" fill="#2b2b2b" stroke="#2b2b2b" stroke-width="0.16" text-anchor="end" textLength="28.48" lengthAdjust="spacingAndGlyphs">121,369</text>
<circle cx="494.2" cy="397.2" r="4.3" fill="url(#gdot)" stroke="#3c9a3c" stroke-width="0.8"/>
<text x="533.8" y="400.0" font-size="8.7" fill="#2b2b2b" stroke="#2b2b2b" stroke-width="0.16" text-anchor="end" textLength="19.78" lengthAdjust="spacingAndGlyphs">-5.0%</text>
<text x="592.2" y="400.0" font-size="8.7" fill="#2b2b2b" stroke="#2b2b2b" stroke-width="0.16" text-anchor="end" textLength="35.02" lengthAdjust="spacingAndGlyphs">1,054,651</text>
<text x="646.8" y="400.0" font-size="8.7" fill="#2b2b2b" stroke="#2b2b2b" stroke-width="0.16" text-anchor="end" textLength="35.02" lengthAdjust="spacingAndGlyphs">1,047,498</text>
<text x="699.0" y="400.0" font-size="8.7" fill="#d23b3b" stroke="#d23b3b" stroke-width="0.16" text-anchor="end" textLength="24.95" lengthAdjust="spacingAndGlyphs">(7,153)</text>
<text x="808.5" y="400.0" font-size="8.7" fill="#d23b3b" stroke="#d23b3b" stroke-width="0.16" text-anchor="end" textLength="29.33" lengthAdjust="spacingAndGlyphs">(50,220)</text>
<text x="751.0" y="400.0" font-size="8.7" fill="#2b2b2b" stroke="#2b2b2b" stroke-width="0.16" text-anchor="end" textLength="35.02" lengthAdjust="spacingAndGlyphs">1,004,431</text>
<text x="89.5" y="411.8" font-size="8.7" fill="#3b3b3b" stroke="#3b3b3b" stroke-width="0.16" textLength="21.93" lengthAdjust="spacingAndGlyphs">60030</text>
<text x="124.8" y="411.8" font-size="8.7" fill="#3b3b3b" stroke="#3b3b3b" stroke-width="0.16" textLength="29.42" lengthAdjust="spacingAndGlyphs">Bonuses</text>
<text x="321.8" y="411.8" font-size="8.7" fill="#2b2b2b" stroke="#2b2b2b" stroke-width="0.16" text-anchor="end" textLength="28.48" lengthAdjust="spacingAndGlyphs">101,950</text>
<text x="382.6" y="411.8" font-size="8.7" fill="#2b2b2b" stroke="#2b2b2b" stroke-width="0.16" text-anchor="end" textLength="24.09" lengthAdjust="spacingAndGlyphs">99,911</text>
<circle cx="391.3" cy="409.0" r="4.3" fill="url(#gdot)" stroke="#3c9a3c" stroke-width="0.8"/>
<text x="430.3" y="411.8" font-size="8.7" fill="#2b2b2b" stroke="#2b2b2b" stroke-width="0.16" text-anchor="end" textLength="19.78" lengthAdjust="spacingAndGlyphs">-2.0%</text>
<text x="485.3" y="411.8" font-size="8.7" fill="#2b2b2b" stroke="#2b2b2b" stroke-width="0.16" text-anchor="end" textLength="24.09" lengthAdjust="spacingAndGlyphs">97,095</text>
<circle cx="494.2" cy="409.0" r="4.3" fill="url(#gdot)" stroke="#3c9a3c" stroke-width="0.8"/>
<text x="533.8" y="411.8" font-size="8.7" fill="#2b2b2b" stroke="#2b2b2b" stroke-width="0.16" text-anchor="end" textLength="19.78" lengthAdjust="spacingAndGlyphs">-5.0%</text>
<text x="592.2" y="411.8" font-size="8.7" fill="#2b2b2b" stroke="#2b2b2b" stroke-width="0.16" text-anchor="end" textLength="28.48" lengthAdjust="spacingAndGlyphs">843,723</text>
<text x="646.8" y="411.8" font-size="8.7" fill="#2b2b2b" stroke="#2b2b2b" stroke-width="0.16" text-anchor="end" textLength="28.48" lengthAdjust="spacingAndGlyphs">833,114</text>
<text x="699.0" y="411.8" font-size="8.7" fill="#d23b3b" stroke="#d23b3b" stroke-width="0.16" text-anchor="end" textLength="29.33" lengthAdjust="spacingAndGlyphs">(10,609)</text>
<text x="808.5" y="411.8" font-size="8.7" fill="#d23b3b" stroke="#d23b3b" stroke-width="0.16" text-anchor="end" textLength="29.33" lengthAdjust="spacingAndGlyphs">(40,179)</text>
<text x="751.0" y="411.8" font-size="8.7" fill="#2b2b2b" stroke="#2b2b2b" stroke-width="0.16" text-anchor="end" textLength="28.48" lengthAdjust="spacingAndGlyphs">803,544</text>
<text x="89.5" y="423.6" font-size="8.7" fill="#3b3b3b" stroke="#3b3b3b" stroke-width="0.16" textLength="21.93" lengthAdjust="spacingAndGlyphs">60500</text>
<text x="124.8" y="423.6" font-size="8.7" fill="#3b3b3b" stroke="#3b3b3b" stroke-width="0.16" textLength="15.77" lengthAdjust="spacingAndGlyphs">FICA</text>
<text x="321.8" y="423.6" font-size="8.7" fill="#2b2b2b" stroke="#2b2b2b" stroke-width="0.16" text-anchor="end" textLength="28.48" lengthAdjust="spacingAndGlyphs">229,387</text>
<text x="382.6" y="423.6" font-size="8.7" fill="#2b2b2b" stroke="#2b2b2b" stroke-width="0.16" text-anchor="end" textLength="28.48" lengthAdjust="spacingAndGlyphs">227,093</text>
<circle cx="391.3" cy="420.8" r="4.3" fill="url(#gdot)" stroke="#3c9a3c" stroke-width="0.8"/>
<text x="430.3" y="423.6" font-size="8.7" fill="#2b2b2b" stroke="#2b2b2b" stroke-width="0.16" text-anchor="end" textLength="19.78" lengthAdjust="spacingAndGlyphs">-1.0%</text>
<text x="485.3" y="423.6" font-size="8.7" fill="#2b2b2b" stroke="#2b2b2b" stroke-width="0.16" text-anchor="end" textLength="28.48" lengthAdjust="spacingAndGlyphs">218,464</text>
<circle cx="494.2" cy="420.8" r="4.3" fill="url(#gdot)" stroke="#3c9a3c" stroke-width="0.8"/>
<text x="533.8" y="423.6" font-size="8.7" fill="#2b2b2b" stroke="#2b2b2b" stroke-width="0.16" text-anchor="end" textLength="19.78" lengthAdjust="spacingAndGlyphs">-5.0%</text>
<text x="592.2" y="423.6" font-size="8.7" fill="#2b2b2b" stroke="#2b2b2b" stroke-width="0.16" text-anchor="end" textLength="35.02" lengthAdjust="spacingAndGlyphs">1,898,377</text>
<text x="646.8" y="423.6" font-size="8.7" fill="#2b2b2b" stroke="#2b2b2b" stroke-width="0.16" text-anchor="end" textLength="35.02" lengthAdjust="spacingAndGlyphs">1,890,389</text>
<text x="699.0" y="423.6" font-size="8.7" fill="#d23b3b" stroke="#d23b3b" stroke-width="0.16" text-anchor="end" textLength="24.95" lengthAdjust="spacingAndGlyphs">(7,988)</text>
<text x="808.5" y="423.6" font-size="8.7" fill="#d23b3b" stroke="#d23b3b" stroke-width="0.16" text-anchor="end" textLength="29.33" lengthAdjust="spacingAndGlyphs">(90,400)</text>
<text x="751.0" y="423.6" font-size="8.7" fill="#2b2b2b" stroke="#2b2b2b" stroke-width="0.16" text-anchor="end" textLength="35.02" lengthAdjust="spacingAndGlyphs">1,807,977</text>
<text x="89.5" y="435.4" font-size="8.7" fill="#3b3b3b" stroke="#3b3b3b" stroke-width="0.16" textLength="21.93" lengthAdjust="spacingAndGlyphs">60510</text>
<text x="124.8" y="435.4" font-size="8.7" fill="#3b3b3b" stroke="#3b3b3b" stroke-width="0.16" textLength="75.07" lengthAdjust="spacingAndGlyphs">Other Fringe Benefits</text>
<text x="321.8" y="435.4" font-size="8.7" fill="#2b2b2b" stroke="#2b2b2b" stroke-width="0.16" text-anchor="end" textLength="28.48" lengthAdjust="spacingAndGlyphs">229,387</text>
<text x="382.6" y="435.4" font-size="8.7" fill="#2b2b2b" stroke="#2b2b2b" stroke-width="0.16" text-anchor="end" textLength="28.48" lengthAdjust="spacingAndGlyphs">229,387</text>
<circle cx="391.3" cy="432.59999999999997" r="4.3" fill="url(#gdot)" stroke="#3c9a3c" stroke-width="0.8"/>
<text x="430.3" y="435.4" font-size="8.7" fill="#2b2b2b" stroke="#2b2b2b" stroke-width="0.16" text-anchor="end" textLength="17.14" lengthAdjust="spacingAndGlyphs">0.0%</text>
<text x="485.3" y="435.4" font-size="8.7" fill="#2b2b2b" stroke="#2b2b2b" stroke-width="0.16" text-anchor="end" textLength="28.48" lengthAdjust="spacingAndGlyphs">218,464</text>
<circle cx="494.2" cy="432.59999999999997" r="4.3" fill="url(#gdot)" stroke="#3c9a3c" stroke-width="0.8"/>
<text x="533.8" y="435.4" font-size="8.7" fill="#2b2b2b" stroke="#2b2b2b" stroke-width="0.16" text-anchor="end" textLength="19.78" lengthAdjust="spacingAndGlyphs">-5.0%</text>
<text x="592.2" y="435.4" font-size="8.7" fill="#2b2b2b" stroke="#2b2b2b" stroke-width="0.16" text-anchor="end" textLength="35.02" lengthAdjust="spacingAndGlyphs">1,898,377</text>
<text x="646.8" y="435.4" font-size="8.7" fill="#2b2b2b" stroke="#2b2b2b" stroke-width="0.16" text-anchor="end" textLength="35.02" lengthAdjust="spacingAndGlyphs">1,886,386</text>
<text x="699.0" y="435.4" font-size="8.7" fill="#d23b3b" stroke="#d23b3b" stroke-width="0.16" text-anchor="end" textLength="29.33" lengthAdjust="spacingAndGlyphs">(11,991)</text>
<text x="808.5" y="435.4" font-size="8.7" fill="#d23b3b" stroke="#d23b3b" stroke-width="0.16" text-anchor="end" textLength="29.33" lengthAdjust="spacingAndGlyphs">(90,400)</text>
<text x="751.0" y="435.4" font-size="8.7" fill="#2b2b2b" stroke="#2b2b2b" stroke-width="0.16" text-anchor="end" textLength="35.02" lengthAdjust="spacingAndGlyphs">1,807,977</text>
<text x="89.5" y="447.2" font-size="8.7" fill="#3b3b3b" stroke="#3b3b3b" stroke-width="0.16" textLength="21.93" lengthAdjust="spacingAndGlyphs">60520</text>
<text x="124.8" y="447.2" font-size="8.7" fill="#3b3b3b" stroke="#3b3b3b" stroke-width="0.16" textLength="62.18" lengthAdjust="spacingAndGlyphs">Pension Expenses</text>
<text x="321.8" y="447.2" font-size="8.7" fill="#2b2b2b" stroke="#2b2b2b" stroke-width="0.16" text-anchor="end" textLength="24.09" lengthAdjust="spacingAndGlyphs">76,462</text>
<text x="382.6" y="447.2" font-size="8.7" fill="#2b2b2b" stroke="#2b2b2b" stroke-width="0.16" text-anchor="end" textLength="24.09" lengthAdjust="spacingAndGlyphs">76,462</text>
<circle cx="391.3" cy="444.4" r="4.3" fill="url(#gdot)" stroke="#3c9a3c" stroke-width="0.8"/>
<text x="430.3" y="447.2" font-size="8.7" fill="#2b2b2b" stroke="#2b2b2b" stroke-width="0.16" text-anchor="end" textLength="17.14" lengthAdjust="spacingAndGlyphs">0.0%</text>
<text x="485.3" y="447.2" font-size="8.7" fill="#2b2b2b" stroke="#2b2b2b" stroke-width="0.16" text-anchor="end" textLength="24.09" lengthAdjust="spacingAndGlyphs">72,821</text>
<circle cx="494.2" cy="444.4" r="4.3" fill="url(#gdot)" stroke="#3c9a3c" stroke-width="0.8"/>
<text x="533.8" y="447.2" font-size="8.7" fill="#2b2b2b" stroke="#2b2b2b" stroke-width="0.16" text-anchor="end" textLength="19.78" lengthAdjust="spacingAndGlyphs">-5.0%</text>
<text x="592.2" y="447.2" font-size="8.7" fill="#2b2b2b" stroke="#2b2b2b" stroke-width="0.16" text-anchor="end" textLength="28.48" lengthAdjust="spacingAndGlyphs">632,792</text>
<text x="646.8" y="447.2" font-size="8.7" fill="#2b2b2b" stroke="#2b2b2b" stroke-width="0.16" text-anchor="end" textLength="28.48" lengthAdjust="spacingAndGlyphs">627,919</text>
<text x="699.0" y="447.2" font-size="8.7" fill="#d23b3b" stroke="#d23b3b" stroke-width="0.16" text-anchor="end" textLength="24.95" lengthAdjust="spacingAndGlyphs">(4,873)</text>
<text x="808.5" y="447.2" font-size="8.7" fill="#d23b3b" stroke="#d23b3b" stroke-width="0.16" text-anchor="end" textLength="29.33" lengthAdjust="spacingAndGlyphs">(30,133)</text>
<text x="751.0" y="447.2" font-size="8.7" fill="#2b2b2b" stroke="#2b2b2b" stroke-width="0.16" text-anchor="end" textLength="28.48" lengthAdjust="spacingAndGlyphs">602,659</text>
<text x="89.5" y="459.0" font-size="8.7" fill="#3b3b3b" stroke="#3b3b3b" stroke-width="0.16" textLength="21.93" lengthAdjust="spacingAndGlyphs">60530</text>
<text x="124.8" y="459.0" font-size="8.7" fill="#3b3b3b" stroke="#3b3b3b" stroke-width="0.16" textLength="82.86" lengthAdjust="spacingAndGlyphs">Workers Compensation</text>
<text x="321.8" y="459.0" font-size="8.7" fill="#2b2b2b" stroke="#2b2b2b" stroke-width="0.16" text-anchor="end" textLength="28.48" lengthAdjust="spacingAndGlyphs">101,950</text>
<text x="382.6" y="459.0" font-size="8.7" fill="#2b2b2b" stroke="#2b2b2b" stroke-width="0.16" text-anchor="end" textLength="24.09" lengthAdjust="spacingAndGlyphs">98,892</text>
<circle cx="391.3" cy="456.2" r="4.3" fill="url(#gdot)" stroke="#3c9a3c" stroke-width="0.8"/>
<text x="430.3" y="459.0" font-size="8.7" fill="#2b2b2b" stroke="#2b2b2b" stroke-width="0.16" text-anchor="end" textLength="19.78" lengthAdjust="spacingAndGlyphs">-3.1%</text>
<text x="485.3" y="459.0" font-size="8.7" fill="#2b2b2b" stroke="#2b2b2b" stroke-width="0.16" text-anchor="end" textLength="24.09" lengthAdjust="spacingAndGlyphs">97,095</text>
<circle cx="494.2" cy="456.2" r="4.3" fill="url(#gdot)" stroke="#3c9a3c" stroke-width="0.8"/>
<text x="533.8" y="459.0" font-size="8.7" fill="#2b2b2b" stroke="#2b2b2b" stroke-width="0.16" text-anchor="end" textLength="19.78" lengthAdjust="spacingAndGlyphs">-5.0%</text>
<text x="592.2" y="459.0" font-size="8.7" fill="#2b2b2b" stroke="#2b2b2b" stroke-width="0.16" text-anchor="end" textLength="28.48" lengthAdjust="spacingAndGlyphs">843,723</text>
<text x="646.8" y="459.0" font-size="8.7" fill="#2b2b2b" stroke="#2b2b2b" stroke-width="0.16" text-anchor="end" textLength="28.48" lengthAdjust="spacingAndGlyphs">836,593</text>
<text x="699.0" y="459.0" font-size="8.7" fill="#d23b3b" stroke="#d23b3b" stroke-width="0.16" text-anchor="end" textLength="24.95" lengthAdjust="spacingAndGlyphs">(7,130)</text>
<text x="808.5" y="459.0" font-size="8.7" fill="#d23b3b" stroke="#d23b3b" stroke-width="0.16" text-anchor="end" textLength="29.33" lengthAdjust="spacingAndGlyphs">(40,179)</text>
<text x="751.0" y="459.0" font-size="8.7" fill="#2b2b2b" stroke="#2b2b2b" stroke-width="0.16" text-anchor="end" textLength="28.48" lengthAdjust="spacingAndGlyphs">803,544</text>
<text x="89.5" y="470.8" font-size="8.7" fill="#3b3b3b" stroke="#3b3b3b" stroke-width="0.16" textLength="21.93" lengthAdjust="spacingAndGlyphs">61010</text>
<text x="124.8" y="470.8" font-size="8.7" fill="#3b3b3b" stroke="#3b3b3b" stroke-width="0.16" textLength="109.04" lengthAdjust="spacingAndGlyphs">Part Time Salaries - Base Salary</text>
<text x="321.8" y="470.8" font-size="8.7" fill="#2b2b2b" stroke="#2b2b2b" stroke-width="0.16" text-anchor="end" textLength="28.48" lengthAdjust="spacingAndGlyphs">254,875</text>
<text x="382.6" y="470.8" font-size="8.7" fill="#2b2b2b" stroke="#2b2b2b" stroke-width="0.16" text-anchor="end" textLength="28.48" lengthAdjust="spacingAndGlyphs">259,973</text>
<circle cx="391.3" cy="468.0" r="4.3" fill="url(#gdot)" stroke="#3c9a3c" stroke-width="0.8"/>
<text x="430.3" y="470.8" font-size="8.7" fill="#2b2b2b" stroke="#2b2b2b" stroke-width="0.16" text-anchor="end" textLength="17.14" lengthAdjust="spacingAndGlyphs">2.0%</text>
<text x="485.3" y="470.8" font-size="8.7" fill="#2b2b2b" stroke="#2b2b2b" stroke-width="0.16" text-anchor="end" textLength="28.48" lengthAdjust="spacingAndGlyphs">242,738</text>
<circle cx="494.2" cy="468.0" r="4.3" fill="url(#gdot)" stroke="#3c9a3c" stroke-width="0.8"/>
<text x="533.8" y="470.8" font-size="8.7" fill="#2b2b2b" stroke="#2b2b2b" stroke-width="0.16" text-anchor="end" textLength="19.78" lengthAdjust="spacingAndGlyphs">-5.0%</text>
<text x="592.2" y="470.8" font-size="8.7" fill="#2b2b2b" stroke="#2b2b2b" stroke-width="0.16" text-anchor="end" textLength="35.02" lengthAdjust="spacingAndGlyphs">2,109,309</text>
<text x="646.8" y="470.8" font-size="8.7" fill="#2b2b2b" stroke="#2b2b2b" stroke-width="0.16" text-anchor="end" textLength="35.02" lengthAdjust="spacingAndGlyphs">2,106,973</text>
<text x="699.0" y="470.8" font-size="8.7" fill="#d23b3b" stroke="#d23b3b" stroke-width="0.16" text-anchor="end" textLength="24.95" lengthAdjust="spacingAndGlyphs">(2,336)</text>
<text x="808.5" y="470.8" font-size="8.7" fill="#d23b3b" stroke="#d23b3b" stroke-width="0.16" text-anchor="end" textLength="33.72" lengthAdjust="spacingAndGlyphs">(100,445)</text>
<text x="751.0" y="470.8" font-size="8.7" fill="#2b2b2b" stroke="#2b2b2b" stroke-width="0.16" text-anchor="end" textLength="35.02" lengthAdjust="spacingAndGlyphs">2,008,864</text>
<text x="89.5" y="482.6" font-size="8.7" fill="#3b3b3b" stroke="#3b3b3b" stroke-width="0.16" textLength="21.93" lengthAdjust="spacingAndGlyphs">61040</text>
<text x="124.8" y="482.6" font-size="8.7" fill="#3b3b3b" stroke="#3b3b3b" stroke-width="0.16" textLength="102.43" lengthAdjust="spacingAndGlyphs">Part Time Salaries - Overtime</text>
<text x="321.8" y="482.6" font-size="8.7" fill="#2b2b2b" stroke="#2b2b2b" stroke-width="0.16" text-anchor="end" textLength="28.48" lengthAdjust="spacingAndGlyphs">178,412</text>
<text x="382.6" y="482.6" font-size="8.7" fill="#2b2b2b" stroke="#2b2b2b" stroke-width="0.16" text-anchor="end" textLength="28.48" lengthAdjust="spacingAndGlyphs">174,844</text>
<circle cx="391.3" cy="479.8" r="4.3" fill="url(#gdot)" stroke="#3c9a3c" stroke-width="0.8"/>
<text x="430.3" y="482.6" font-size="8.7" fill="#2b2b2b" stroke="#2b2b2b" stroke-width="0.16" text-anchor="end" textLength="19.78" lengthAdjust="spacingAndGlyphs">-2.0%</text>
<text x="485.3" y="482.6" font-size="8.7" fill="#2b2b2b" stroke="#2b2b2b" stroke-width="0.16" text-anchor="end" textLength="28.48" lengthAdjust="spacingAndGlyphs">169,916</text>
<circle cx="494.2" cy="479.8" r="4.3" fill="url(#gdot)" stroke="#3c9a3c" stroke-width="0.8"/>
<text x="533.8" y="482.6" font-size="8.7" fill="#2b2b2b" stroke="#2b2b2b" stroke-width="0.16" text-anchor="end" textLength="19.78" lengthAdjust="spacingAndGlyphs">-5.0%</text>
<text x="592.2" y="482.6" font-size="8.7" fill="#2b2b2b" stroke="#2b2b2b" stroke-width="0.16" text-anchor="end" textLength="35.02" lengthAdjust="spacingAndGlyphs">1,476,515</text>
<text x="646.8" y="482.6" font-size="8.7" fill="#2b2b2b" stroke="#2b2b2b" stroke-width="0.16" text-anchor="end" textLength="35.02" lengthAdjust="spacingAndGlyphs">1,462,574</text>
<text x="699.0" y="482.6" font-size="8.7" fill="#d23b3b" stroke="#d23b3b" stroke-width="0.16" text-anchor="end" textLength="29.33" lengthAdjust="spacingAndGlyphs">(13,941)</text>
<text x="808.5" y="482.6" font-size="8.7" fill="#d23b3b" stroke="#d23b3b" stroke-width="0.16" text-anchor="end" textLength="29.33" lengthAdjust="spacingAndGlyphs">(70,311)</text>
<text x="751.0" y="482.6" font-size="8.7" fill="#2b2b2b" stroke="#2b2b2b" stroke-width="0.16" text-anchor="end" textLength="35.02" lengthAdjust="spacingAndGlyphs">1,406,204</text>
<text x="89.5" y="494.4" font-size="8.7" fill="#3b3b3b" stroke="#3b3b3b" stroke-width="0.16" textLength="21.93" lengthAdjust="spacingAndGlyphs">61050</text>
<text x="124.8" y="494.4" font-size="8.7" fill="#3b3b3b" stroke="#3b3b3b" stroke-width="0.16" textLength="91.09" lengthAdjust="spacingAndGlyphs">Part Time Salaries - Bonus</text>
<text x="321.8" y="494.4" font-size="8.7" fill="#2b2b2b" stroke="#2b2b2b" stroke-width="0.16" text-anchor="end" textLength="24.09" lengthAdjust="spacingAndGlyphs">25,488</text>
<text x="382.6" y="494.4" font-size="8.7" fill="#2b2b2b" stroke="#2b2b2b" stroke-width="0.16" text-anchor="end" textLength="24.09" lengthAdjust="spacingAndGlyphs">24,978</text>
<circle cx="391.3" cy="491.59999999999997" r="4.3" fill="url(#gdot)" stroke="#3c9a3c" stroke-width="0.8"/>
<text x="430.3" y="494.4" font-size="8.7" fill="#2b2b2b" stroke="#2b2b2b" stroke-width="0.16" text-anchor="end" textLength="19.78" lengthAdjust="spacingAndGlyphs">-2.0%</text>
<text x="485.3" y="494.4" font-size="8.7" fill="#2b2b2b" stroke="#2b2b2b" stroke-width="0.16" text-anchor="end" textLength="24.09" lengthAdjust="spacingAndGlyphs">24,274</text>
<circle cx="494.2" cy="491.59999999999997" r="4.3" fill="url(#gdot)" stroke="#3c9a3c" stroke-width="0.8"/>
<text x="533.8" y="494.4" font-size="8.7" fill="#2b2b2b" stroke="#2b2b2b" stroke-width="0.16" text-anchor="end" textLength="19.78" lengthAdjust="spacingAndGlyphs">-5.0%</text>
<text x="592.2" y="494.4" font-size="8.7" fill="#2b2b2b" stroke="#2b2b2b" stroke-width="0.16" text-anchor="end" textLength="28.48" lengthAdjust="spacingAndGlyphs">210,930</text>
<text x="646.8" y="494.4" font-size="8.7" fill="#2b2b2b" stroke="#2b2b2b" stroke-width="0.16" text-anchor="end" textLength="28.48" lengthAdjust="spacingAndGlyphs">209,012</text>
<text x="699.0" y="494.4" font-size="8.7" fill="#d23b3b" stroke="#d23b3b" stroke-width="0.16" text-anchor="end" textLength="24.95" lengthAdjust="spacingAndGlyphs">(1,918)</text>
<text x="808.5" y="494.4" font-size="8.7" fill="#d23b3b" stroke="#d23b3b" stroke-width="0.16" text-anchor="end" textLength="29.33" lengthAdjust="spacingAndGlyphs">(10,044)</text>
<text x="751.0" y="494.4" font-size="8.7" fill="#2b2b2b" stroke="#2b2b2b" stroke-width="0.16" text-anchor="end" textLength="28.48" lengthAdjust="spacingAndGlyphs">200,886</text>
<text x="89.5" y="506.2" font-size="8.7" fill="#3b3b3b" stroke="#3b3b3b" stroke-width="0.16" textLength="21.93" lengthAdjust="spacingAndGlyphs">61500</text>
<text x="124.8" y="506.2" font-size="8.7" fill="#3b3b3b" stroke="#3b3b3b" stroke-width="0.16" textLength="56.23" lengthAdjust="spacingAndGlyphs">Part Time - FICA</text>
<text x="321.8" y="506.2" font-size="8.7" fill="#2b2b2b" stroke="#2b2b2b" stroke-width="0.16" text-anchor="end" textLength="24.09" lengthAdjust="spacingAndGlyphs">76,462</text>
<text x="382.6" y="506.2" font-size="8.7" fill="#2b2b2b" stroke="#2b2b2b" stroke-width="0.16" text-anchor="end" textLength="24.09" lengthAdjust="spacingAndGlyphs">77,001</text>
<circle cx="391.3" cy="503.4" r="4.3" fill="url(#gdot)" stroke="#3c9a3c" stroke-width="0.8"/>
<text x="430.3" y="506.2" font-size="8.7" fill="#2b2b2b" stroke="#2b2b2b" stroke-width="0.16" text-anchor="end" textLength="17.14" lengthAdjust="spacingAndGlyphs">2.0%</text>
<text x="485.3" y="506.2" font-size="8.7" fill="#2b2b2b" stroke="#2b2b2b" stroke-width="0.16" text-anchor="end" textLength="24.09" lengthAdjust="spacingAndGlyphs">72,821</text>
<circle cx="494.2" cy="503.4" r="4.3" fill="url(#gdot)" stroke="#3c9a3c" stroke-width="0.8"/>
<text x="533.8" y="506.2" font-size="8.7" fill="#2b2b2b" stroke="#2b2b2b" stroke-width="0.16" text-anchor="end" textLength="19.78" lengthAdjust="spacingAndGlyphs">-5.0%</text>
<text x="592.2" y="506.2" font-size="8.7" fill="#2b2b2b" stroke="#2b2b2b" stroke-width="0.16" text-anchor="end" textLength="28.48" lengthAdjust="spacingAndGlyphs">632,792</text>
<text x="646.8" y="506.2" font-size="8.7" fill="#2b2b2b" stroke="#2b2b2b" stroke-width="0.16" text-anchor="end" textLength="28.48" lengthAdjust="spacingAndGlyphs">636,581</text>
<text x="699.0" y="506.2" font-size="8.7" fill="#d23b3b" stroke="#d23b3b" stroke-width="0.16" text-anchor="end" textLength="24.95" lengthAdjust="spacingAndGlyphs">(6,211)</text>
<text x="808.5" y="506.2" font-size="8.7" fill="#d23b3b" stroke="#d23b3b" stroke-width="0.16" text-anchor="end" textLength="29.33" lengthAdjust="spacingAndGlyphs">(30,133)</text>
<text x="751.0" y="506.2" font-size="8.7" fill="#2b2b2b" stroke="#2b2b2b" stroke-width="0.16" text-anchor="end" textLength="28.48" lengthAdjust="spacingAndGlyphs">602,659</text>
    </g>
<rect x="2" y="128.4" width="33.3" height="31.6" fill="#3b4654"/>
<line x1="2" y1="29.5" x2="35.3" y2="29.5" stroke="#283039" stroke-width="0.8"/>
<line x1="2" y1="64" x2="35.3" y2="64" stroke="#283039" stroke-width="0.8"/>
<line x1="2" y1="96" x2="35.3" y2="96" stroke="#283039" stroke-width="0.8"/>
<line x1="2" y1="128.4" x2="35.3" y2="128.4" stroke="#283039" stroke-width="0.8"/>
<line x1="2" y1="160" x2="35.3" y2="160" stroke="#283039" stroke-width="0.8"/>
<line x1="2" y1="192" x2="35.3" y2="192" stroke="#283039" stroke-width="0.8"/>
<line x1="2" y1="224" x2="35.3" y2="224" stroke="#283039" stroke-width="0.8"/>
<line x1="2" y1="256" x2="35.3" y2="256" stroke="#283039" stroke-width="0.8"/>
<line x1="2" y1="288" x2="35.3" y2="288" stroke="#283039" stroke-width="0.8"/>
<line x1="2" y1="320" x2="35.3" y2="320" stroke="#283039" stroke-width="0.8"/>
<line x1="2" y1="352" x2="35.3" y2="352" stroke="#283039" stroke-width="0.8"/>
<path d="M8.6 16.9 L20.4 11.4 L18.5 18.4 Z" fill="#2a6ab3"/>
<path d="M18.9 18.5 L22.3 11.1 L28.2 18.5 Z" fill="#8cc63f"/>
<path d="M10.9 48.1 L18.1 40.9 L25.5 48.1" fill="none" stroke="#4a7fc1" stroke-width="1.6"/>
<path d="M12.7 48.2 L18.1 43.4 L24.2 48.2 L24.2 54.8 L12.7 54.8 Z" fill="#ffffff"/>
<rect x="14.1" y="49.7" width="2.7" height="1.4" fill="#2f3742"/>
<rect x="18.3" y="49.7" width="2.7" height="5.2" fill="#2f3742"/>
<rect x="10.7" y="73.6" width="3.9" height="13.2" fill="#ffffff"/>
<rect x="11.5" y="74.5" width="2.3" height="6" fill="#263b55"/>
<circle cx="12.649999999999999" cy="84" r="0.95" fill="#1e242c"/>
<rect x="15.2" y="73.6" width="3.9" height="13.2" fill="#ffffff"/>
<rect x="16.0" y="74.5" width="2.3" height="6" fill="#263b55"/>
<circle cx="17.15" cy="84" r="0.95" fill="#1e242c"/>
<g transform="rotate(-13 22.6 86.8)"><rect x="20.4" y="73.8" width="3.9" height="13" fill="#ffffff"/><rect x="21.2" y="74.7" width="2.3" height="6" fill="#263b55"/><circle cx="22.35" cy="84" r="0.95" fill="#1e242c"/></g>
<rect x="13.5" y="105" width="9.6" height="13.2" rx="1" fill="none" stroke="#ffffff" stroke-width="1.1"/>
<path d="M15.6 105.6 Q18.3 102.2 21 105.6 Z" fill="#ffffff"/>
<rect x="14.3" y="106.2" width="8" height="11.2" fill="#263a55"/>
<path d="M15.8 109.6 L17.5 111.2 L20.8 108" fill="none" stroke="#4a7fc1" stroke-width="1.1"/>
<path d="M15.8 113.6 L17.5 115.2 L20.8 112" fill="none" stroke="#4a7fc1" stroke-width="1.1"/>
<rect x="12.3" y="136.5" width="12.1" height="14.6" fill="#2a3442" stroke="#ffffff" stroke-width="1.1"/>
<rect x="13.9" y="138.1" width="8.9" height="2.4" fill="#ffffff"/>
<path d="M14.8 142.2 L20.9 145 L14.8 147.9 Z" fill="#4a7fc1"/>
<rect x="12.7" y="168.2" width="11" height="15" rx="1.2" fill="#ffffff"/>
<rect x="14.1" y="169.5" width="8.2" height="2.6" fill="#4a7fc1"/>
<circle cx="15.4" cy="175.1" r="0.85" fill="#222"/>
<circle cx="18.1" cy="175.1" r="0.85" fill="#222"/>
<circle cx="20.8" cy="175.1" r="0.85" fill="#222"/>
<circle cx="15.4" cy="177.7" r="0.85" fill="#222"/>
<circle cx="18.1" cy="177.7" r="0.85" fill="#222"/>
<circle cx="20.8" cy="177.7" r="0.85" fill="#222"/>
<circle cx="15.4" cy="180.3" r="0.85" fill="#222"/>
<circle cx="18.1" cy="180.3" r="0.85" fill="#222"/>
<circle cx="20.8" cy="180.3" r="0.85" fill="#222"/>
<circle cx="18.3" cy="207" r="6.8" fill="none" stroke="#3f6b9e" stroke-width="0.9"/>
<path d="M10.9 204.2 L14.5 204.2 L16.4 206.1 L16.4 211.3 L10.9 211.3 Z" fill="#2f3742" stroke="#ffffff" stroke-width="1"/>
<circle cx="23" cy="206.2" r="1.9" fill="#ffffff"/>
<path d="M20 211 Q20 208.2 23 208.2 Q26 208.2 26 211 Z" fill="#ffffff"/>
<rect x="14.7" y="232.5" width="6.3" height="4.099999999999994" rx="1.4" fill="#ffffff"/>
<rect x="16.4" y="233.85000000000002" width="2.9" height="1.4" rx="0.6" fill="#1e242c"/>
<rect x="14.7" y="238.0" width="6.3" height="3.9000000000000057" rx="1.4" fill="#ffffff"/>
<rect x="16.4" y="239.25" width="2.9" height="1.4" rx="0.6" fill="#1e242c"/>
<rect x="14.7" y="243.5" width="6.3" height="4.199999999999989" rx="1.4" fill="#ffffff"/>
<rect x="16.4" y="244.9" width="2.9" height="1.4" rx="0.6" fill="#1e242c"/>
<path d="M13 236 L11.4 237.4 L13 238.8" fill="none" stroke="#3f6b9e" stroke-width="0.9"/>
<path d="M22.8 241.4 L24.4 242.8 L22.8 244.2" fill="none" stroke="#3f6b9e" stroke-width="0.9"/>
<path d="M16.6 271.4 L12.3 275.8 A1.3 1.3 0 0 0 14.2 277.7 L18.5 273.3 Z" fill="#4a7fc1"/>
<path d="M18.2 269.9 L21.8 266.2 L20.6 265 L22.6 264.4 L25.9 267.7 L25.3 269.7 L24.1 268.5 L20.2 272.2 Z" fill="#ffffff"/>
<path d="M10.6 265.9 A3.6 3.6 0 0 0 15.6 270.1 L21.6 277 A1.6 1.6 0 0 0 24.2 275 L18 268.2 A3.6 3.6 0 0 0 13.8 263.2 L15.3 265.4 L13.4 267.4 Z" fill="#ffffff"/>
<circle cx="22.6" cy="275.9" r="0.6" fill="#2f3742"/>
<path d="M17.5 305 L23.3 305 A2.5 2.5 0 0 0 23.6 300 A3.8 3.8 0 0 0 16.4 298.6 A2.8 2.8 0 0 0 13.6 302" fill="none" stroke="#3f6b9e" stroke-width="1.1"/>
<rect x="10.8" y="301.9" width="8.4" height="10.1" rx="0.8" fill="#ffffff"/>
<rect x="12.4" y="303.3" width="2.8" height="1" fill="#555"/>
<rect x="12.4" y="306.4" width="2.8" height="1" fill="#555"/>
<rect x="12.4" y="309.5" width="2.8" height="1" fill="#555"/>
<line x1="10.8" y1="305.1" x2="19.2" y2="305.1" stroke="#2d3540" stroke-width="0.4"/>
<line x1="10.8" y1="308.2" x2="19.2" y2="308.2" stroke="#2d3540" stroke-width="0.4"/>
<path d="M17.38 329.04 L18.82 329.04 L19.67 331.13 L20.65 331.54 L22.73 330.66 L23.74 331.67 L22.86 333.75 L23.27 334.73 L25.36 335.58 L25.36 337.02 L23.27 337.87 L22.86 338.85 L23.74 340.93 L22.73 341.94 L20.65 341.06 L19.67 341.47 L18.82 343.56 L17.38 343.56 L16.53 341.47 L15.55 341.06 L13.47 341.94 L12.46 340.93 L13.34 338.85 L12.93 337.87 L10.84 337.02 L10.84 335.58 L12.93 334.73 L13.34 333.75 L12.46 331.67 L13.47 330.66 L15.55 331.54 L16.53 331.13 Z" fill="#ffffff" stroke="#ffffff" stroke-width="0.6" stroke-linejoin="round"/>
<circle cx="18.1" cy="336.3" r="2.9" fill="#2f3742"/>
<rect x="43.1" y="8.3" width="5.6" height="1.1" fill="#444"/>
<rect x="43.1" y="10.8" width="5.6" height="1.1" fill="#444"/>
<rect x="43.1" y="13.3" width="5.6" height="1.1" fill="#444"/>
<text x="63.4" y="16.2" font-size="11" fill="#8b8b8b" textLength="62" lengthAdjust="spacingAndGlyphs">Live Reporting</text>
<path d="M133.7 10.6 L137.2 12.8 L133.7 15" fill="none" stroke="#4a7fc1" stroke-width="1.1"/>
<text x="145.5" y="16.2" font-size="11" fill="#8b8b8b" textLength="94.3" lengthAdjust="spacingAndGlyphs">RET16 - PL Act vs Bud</text>
<path d="M680 14.6 L686.8 14.6 L685.6 13.2 L685.6 10.6 A2.2 2.2 0 0 0 681.2 10.6 L681.2 13.2 Z" fill="#333"/>
<circle cx="683.4" cy="8.9" r="0.8" fill="#333"/><path d="M682.3 15.1 A1.1 1.1 0 0 0 684.5 15.1 Z" fill="#333"/>
<text x="691" y="14.8" font-size="8.5" fill="#8a8a8a" textLength="41.6" lengthAdjust="spacingAndGlyphs">Notifications</text>
<path d="M735.8 11.8 L738.2 14 L740.6 11.8" fill="none" stroke="#999" stroke-width="0.9"/>
<circle cx="758.4" cy="12" r="4.1" fill="none" stroke="#333" stroke-width="1.1"/>
<circle cx="757" cy="11" r="0.6" fill="#333"/><circle cx="759.8" cy="11" r="0.6" fill="#333"/>
<path d="M756.4 12.8 Q758.4 15 760.4 12.8" fill="none" stroke="#333" stroke-width="0.9"/>
<text x="766.2" y="14.8" font-size="8.5" fill="#8a8a8a" textLength="32" lengthAdjust="spacingAndGlyphs">Feedback</text>
<circle cx="815.5" cy="12" r="4.1" fill="none" stroke="#333" stroke-width="1.1"/>
<text x="815.5" y="14.6" font-size="7" font-weight="700" fill="#333" text-anchor="middle">?</text>
<text x="823.3" y="14.8" font-size="8.5" fill="#8a8a8a" textLength="15.2" lengthAdjust="spacingAndGlyphs">Help</text>
<line x1="850.5" y1="6" x2="850.5" y2="19" stroke="#e2e2e2" stroke-width="1"/>
<circle cx="867.5" cy="10.3" r="2.3" fill="#222"/><path d="M863.8 17.2 Q863.8 13.2 867.5 13.2 Q871.2 13.2 871.2 17.2 Z" fill="#222"/>
<text x="873.4" y="11.1" font-size="8.6" fill="#7d7d7d" textLength="62.6" lengthAdjust="spacingAndGlyphs">Nils Rasmussen</text>
<text x="873.4" y="19.3" font-size="6.2" fill="#b8b8b8" textLength="40.8" lengthAdjust="spacingAndGlyphs" style="font-variant:small-caps">15. Retail Demo</text>
<path d="M940.8 11 L942.9 13 L945 11" fill="none" stroke="#aaa" stroke-width="0.9"/>
<rect x="76" y="36.2" width="5" height="9" fill="#444"/><rect x="80.5" y="39.5" width="3.6" height="5.7" fill="#444"/>
<rect x="77" y="37.4" width="1" height="1" fill="#fbfbfb"/><rect x="79" y="37.4" width="1" height="1" fill="#fbfbfb"/><rect x="77" y="39.6" width="1" height="1" fill="#fbfbfb"/><rect x="79" y="39.6" width="1" height="1" fill="#fbfbfb"/><rect x="77" y="41.8" width="1" height="1" fill="#fbfbfb"/><rect x="79" y="41.8" width="1" height="1" fill="#fbfbfb"/>
<text x="88.6" y="43.8" font-size="8.6" fill="#333" textLength="56.2" lengthAdjust="spacingAndGlyphs" stroke="#333" stroke-width="0.15">Data Warehouse</text>
<path d="M150.6 40.2 L152.8 42.4 L155 40.2" fill="none" stroke="#333" stroke-width="1.1"/>
<path d="M749.3 30.6 L755 30.6 L757.3 32.9 L757.3 39.3 L749.3 39.3 Z" fill="none" stroke="#333" stroke-width="1"/>
<text x="753.3" y="51.5" font-size="6.6" font-weight="700" fill="#777777" text-anchor="middle" textLength="24.7" lengthAdjust="spacingAndGlyphs">PUBLISH</text>
<path d="M776 38.9 L776.6 36.5 L782.2 30.9 L783.9 32.6 L778.3 38.2 Z" fill="#333"/>
<text x="780" y="51.5" font-size="6.6" font-weight="700" fill="#777777" text-anchor="middle" textLength="12.7" lengthAdjust="spacingAndGlyphs">EDIT</text>
<rect x="802" y="31.2" width="6.6" height="1.1" fill="#333"/><path d="M802.6 32.8 L808 32.8 L807.5 39.4 L803.1 39.4 Z" fill="#333"/>
<line x1="804.4" y1="33.8" x2="804.4" y2="38.5" stroke="#fbfbfb" stroke-width="0.5"/><line x1="806.2" y1="33.8" x2="806.2" y2="38.5" stroke="#fbfbfb" stroke-width="0.5"/>
<text x="805" y="51.5" font-size="6.6" font-weight="700" fill="#777777" text-anchor="middle" textLength="21.5" lengthAdjust="spacingAndGlyphs">DELETE</text>
<rect x="845.6" y="30.3" width="8.3" height="9.2" fill="none" stroke="#333" stroke-width="1"/><rect x="845.6" y="30.3" width="8.3" height="2" fill="#333"/>
<rect x="847.4" y="34" width="4.6" height="4" fill="none" stroke="#333" stroke-width="0.8"/><path d="M848.2 34.6 L851 37.4 M851 34.6 L848.2 37.4" stroke="#333" stroke-width="0.7"/>
<text x="849.8" y="51.5" font-size="6.6" font-weight="700" fill="#777777" text-anchor="middle" textLength="51.9" lengthAdjust="spacingAndGlyphs">EXPORT TO EXCEL</text>
<path d="M847.8 53 L850 55.3 L852.3 53" fill="none" stroke="#222" stroke-width="1.2"/>
<path d="M893.2 34.9 A4.2 4.2 0 1 1 894 37.3" fill="none" stroke="#222" stroke-width="1.2"/><path d="M891.6 33.6 L893.4 36.2 L895.3 33.9 Z" fill="#222"/>
<path d="M896.6 32.6 L896.6 35.2 L898.6 35.2" fill="none" stroke="#222" stroke-width="0.9"/>
<text x="896.3" y="51.5" font-size="6.6" font-weight="700" fill="#777777" text-anchor="middle" textLength="25" lengthAdjust="spacingAndGlyphs">HISTORY</text>
<path d="M922.6 31.4 L930 38.8 M930 31.4 L922.6 38.8" stroke="#111" stroke-width="2.1"/>
<text x="926" y="51.5" font-size="6.6" font-weight="700" fill="#777777" text-anchor="middle" textLength="18.5" lengthAdjust="spacingAndGlyphs">CLOSE</text>
<text x="73.4" y="86.9" font-size="10.8" fill="#858585" textLength="78.1" lengthAdjust="spacingAndGlyphs">Report parameters</text>
<path d="M156.8 83 L158.8 85 L160.8 83" fill="none" stroke="#444" stroke-width="1.1"/>
<text x="790" y="106.8" font-size="8.4" fill="#6e6e6e" textLength="55.3" lengthAdjust="spacingAndGlyphs">Auto-refresh: Off</text>
<rect x="855" y="102.5" width="54" height="2" rx="1" fill="#dddddd"/>
<circle cx="855.3" cy="103.6" r="5.9" fill="#3f7ec6"/>
<rect x="913.4" y="99.8" width="8" height="8" fill="none" stroke="#c8c8c8" stroke-width="0.9"/><path d="M915.5 105.6 L920.3 100.8 M917.6 100.8 L920.3 100.8 L920.3 103.5" fill="none" stroke="#c8c8c8" stroke-width="0.8"/>
<line x1="926.3" y1="99.6" x2="926.3" y2="108.6" stroke="#cfcfcf" stroke-width="0.9"/>
<line x1="928.4" y1="99.6" x2="928.4" y2="108.6" stroke="#cfcfcf" stroke-width="0.9"/>
<line x1="930.5" y1="99.6" x2="930.5" y2="108.6" stroke="#cfcfcf" stroke-width="0.9"/>
<line x1="932.5999999999999" y1="99.6" x2="932.5999999999999" y2="108.6" stroke="#cfcfcf" stroke-width="0.9"/>
<line x1="934.6999999999999" y1="99.6" x2="934.6999999999999" y2="108.6" stroke="#cfcfcf" stroke-width="0.9"/>
<line x1="925.8" y1="99.8" x2="935" y2="99.8" stroke="#cfcfcf" stroke-width="0.7"/>
<line x1="925.8" y1="102.0" x2="935" y2="102.0" stroke="#cfcfcf" stroke-width="0.7"/>
<line x1="925.8" y1="104.2" x2="935" y2="104.2" stroke="#cfcfcf" stroke-width="0.7"/>
<line x1="925.8" y1="106.39999999999999" x2="935" y2="106.39999999999999" stroke="#cfcfcf" stroke-width="0.7"/>
<line x1="925.8" y1="108.6" x2="935" y2="108.6" stroke="#cfcfcf" stroke-width="0.7"/>
<path d="M45.3 40.9 L47.3 43 L45.3 45.1 M48.2 40.9 L50.2 43 L48.2 45.1" fill="none" stroke="#666" stroke-width="1.2"/>
<text x="0" y="0" font-size="12.2" fill="#6a6a6a" textLength="63.5" lengthAdjust="spacingAndGlyphs" transform="translate(51.5 116.5) rotate(-90)">Parameters</text>
<path d="M42 125.4 L51.5 125.4 L48 129.6 L48 134.9 L45.5 133.6 L45.5 129.6 Z" fill="#333"/>
<rect x="923.6" y="113.8" width="12.4" height="390.9" fill="#e9e9e9"/>
<line x1="923.6" y1="113.8" x2="923.6" y2="504.7" stroke="#d6d6d6" stroke-width="0.6"/>
<rect x="925.2" y="114.6" width="9" height="7.4" fill="#fff" stroke="#c6c6c6" stroke-width="0.7"/>
<path d="M927.6 119.6 L929.7 117.3 L931.8 119.6 Z" fill="#444"/>
<rect x="925.2" y="122.8" width="9" height="106.2" fill="#fff" stroke="#cfcfcf" stroke-width="0.6"/>
<rect x="925.9" y="495.3" width="8.4" height="7.6" fill="#fff" stroke="#c6c6c6" stroke-width="0.7"/>
<path d="M928 498.4 L930.1 500.6 L932.2 498.4 Z" fill="#444"/>
<rect x="73" y="503.6" width="863" height="17.6" fill="#e6e6e6"/>
<line x1="73" y1="503.9" x2="923.6" y2="503.9" stroke="#d2d2d2" stroke-width="0.6"/>
<path d="M91.6 509.6 L89.8 511.6 L91.6 513.6" fill="none" stroke="#c4c4c4" stroke-width="0.8"/>
<path d="M106.4 509.6 L108.2 511.6 L106.4 513.6" fill="none" stroke="#c4c4c4" stroke-width="0.8"/>
<rect x="132.3" y="503.6" width="58.2" height="15.2" fill="#ffffff"/>
<line x1="132.3" y1="503.6" x2="132.3" y2="518.8" stroke="#cfcfcf" stroke-width="0.6"/><line x1="190.5" y1="503.6" x2="190.5" y2="518.8" stroke="#cfcfcf" stroke-width="0.6"/>
<rect x="132.3" y="517.6" width="58.2" height="1.3" fill="#2b7a4b"/>
<text x="161.1" y="514.6" font-size="8.3" font-weight="700" fill="#2b7a4b" text-anchor="middle" textLength="42.3" lengthAdjust="spacingAndGlyphs">PL Variance</text>
<line x1="574.5" y1="507.6" x2="574.5" y2="516.4" stroke="#bdbdbd" stroke-width="0.8" stroke-dasharray="1 1.2"/>
<rect x="583" y="508.2" width="340" height="8.2" fill="#ececec"/>
<rect x="583.2" y="508.2" width="8" height="8.2" fill="#fff" stroke="#c6c6c6" stroke-width="0.6"/>
<path d="M588.4 510.3 L586.2 512.3 L588.4 514.3 Z" fill="#444"/>
<rect x="591.8" y="508.2" width="170.5" height="8.2" fill="#fff" stroke="#cfcfcf" stroke-width="0.6"/>
<rect x="914.4" y="508.2" width="8" height="8.2" fill="#fff" stroke="#c6c6c6" stroke-width="0.6"/>
<path d="M917.3 510.3 L919.5 512.3 L917.3 514.3 Z" fill="#444"/>
  </svg>
</div>
<div id="frame"></div>
</body></html>
